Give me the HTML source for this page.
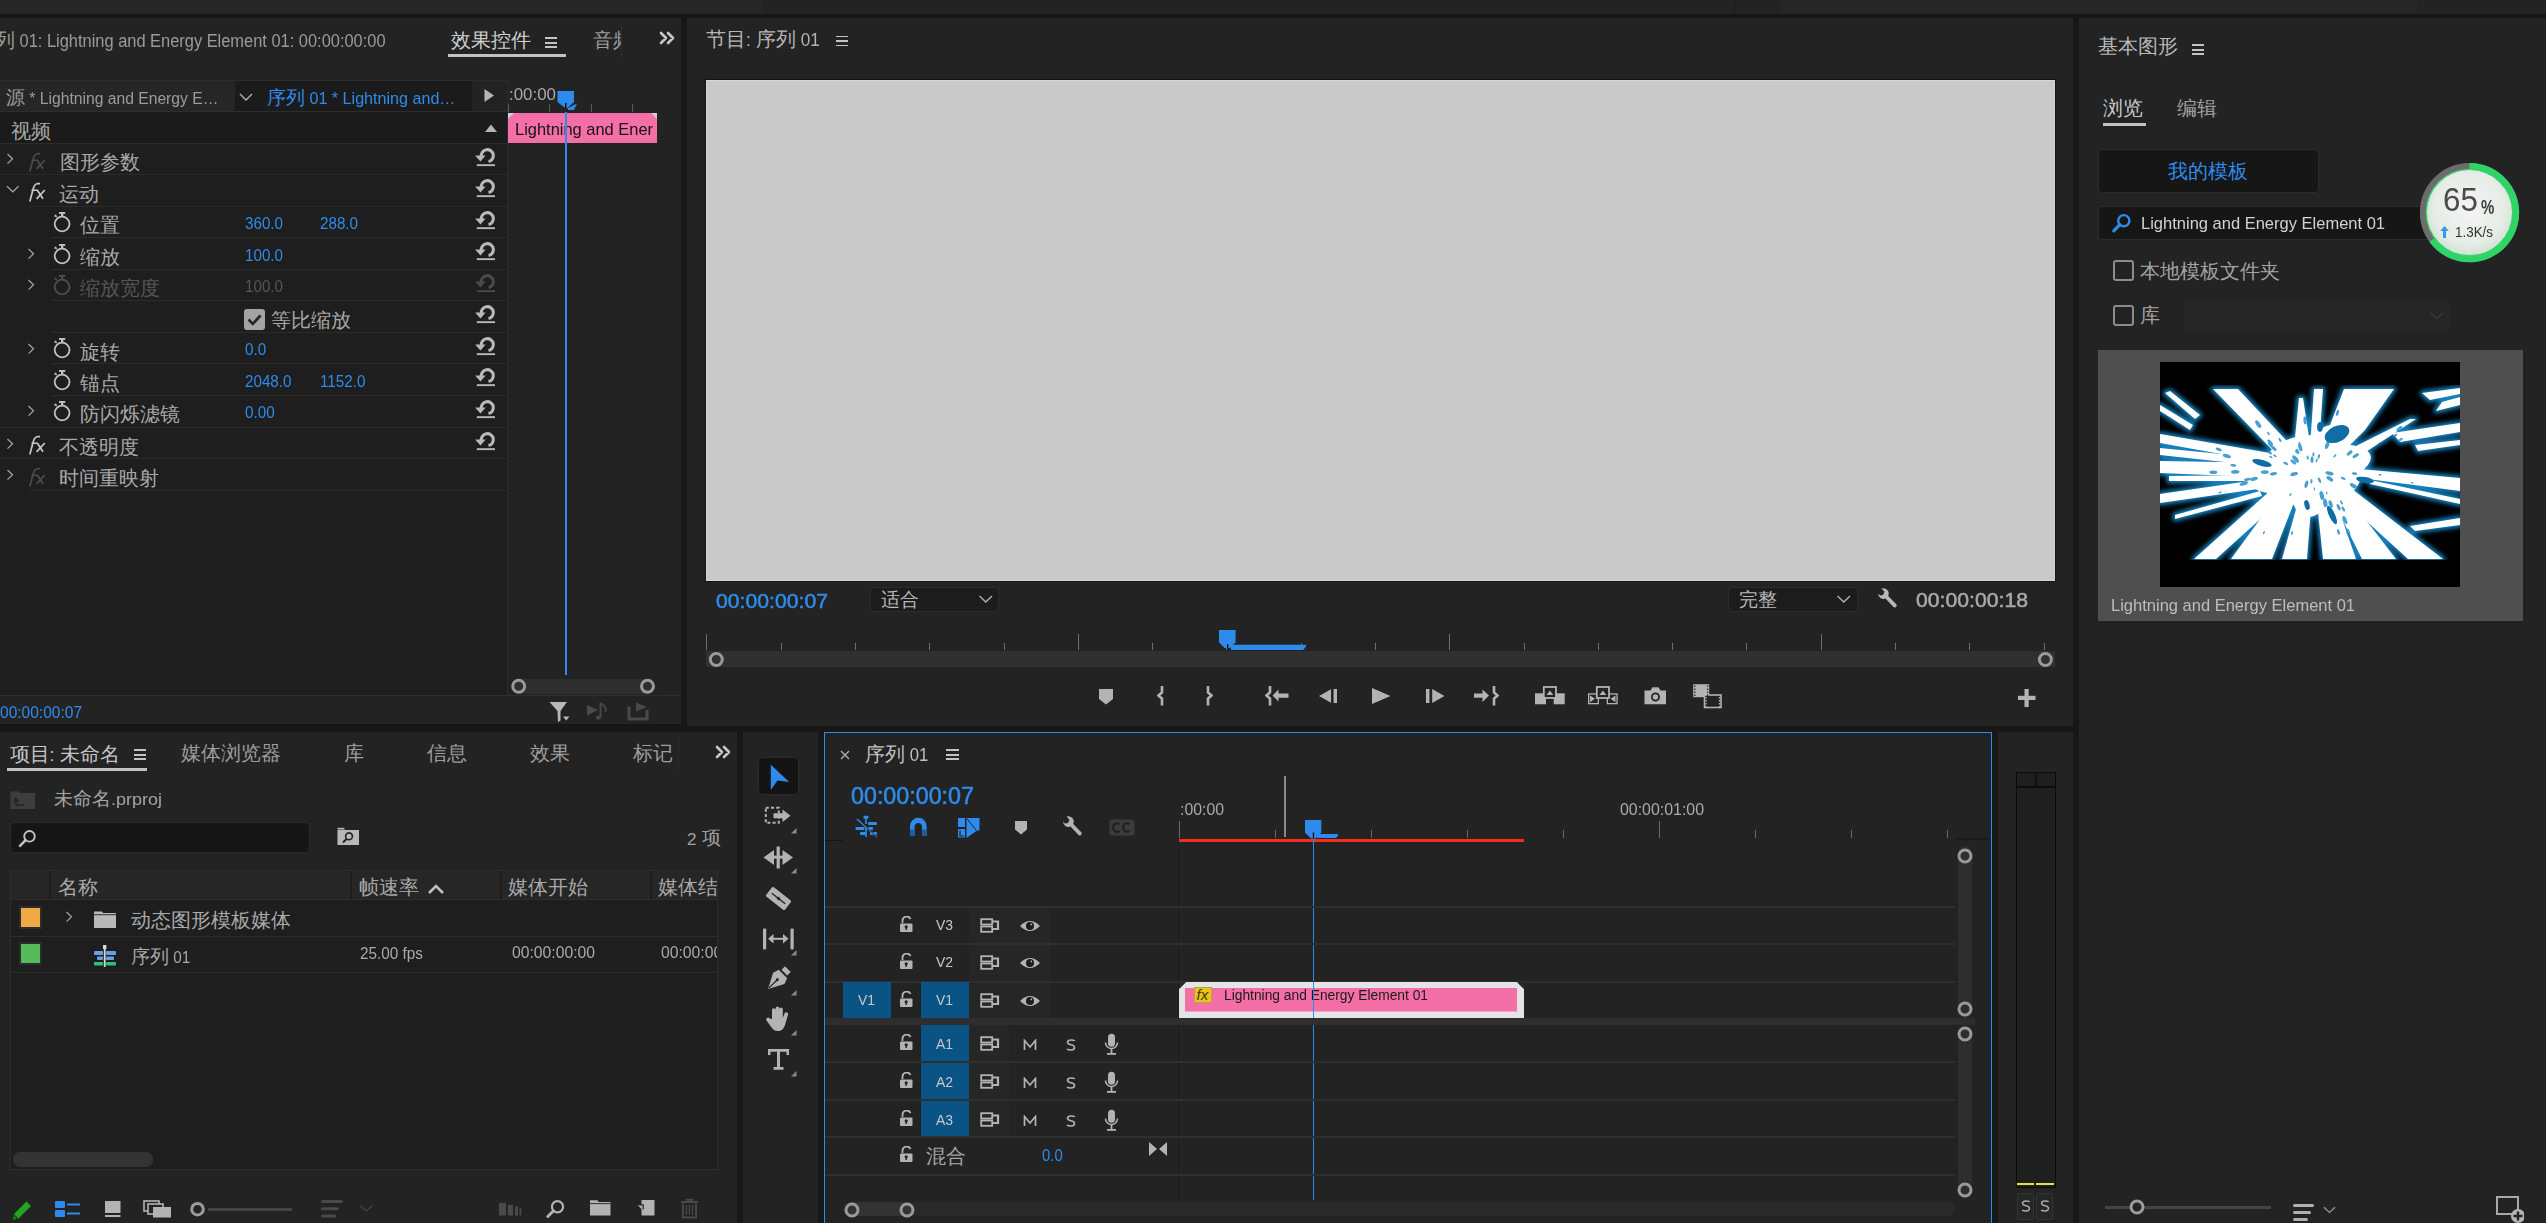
<!DOCTYPE html>
<html><head><meta charset="utf-8"><style>
html,body{margin:0;padding:0;}
body{width:2546px;height:1223px;overflow:hidden;background:#171717;position:relative;font-family:"Liberation Sans",sans-serif;}
div,svg{position:absolute;box-sizing:border-box;}
.t{white-space:nowrap;}
</style></head><body>
<div style="left:0px;top:0px;width:2546px;height:14px;background:#232323;"></div>
<div style="left:0px;top:0px;width:763px;height:14px;background:#262626;"></div>
<div style="left:1780px;top:0px;width:637px;height:14px;background:#262626;"></div>
<div style="left:1734px;top:0px;width:1px;height:14px;background:#191919;"></div>
<div style="left:0px;top:14px;width:2546px;height:4px;background:#171717;"></div>
<div style="left:0px;top:18px;width:681px;height:708px;background:#232323;"></div>
<div style="left:687px;top:18px;width:1386px;height:708px;background:#232323;"></div>
<div style="left:2079px;top:18px;width:467px;height:1205px;background:#232323;"></div>
<div style="left:0px;top:732px;width:737px;height:491px;background:#232323;"></div>
<div style="left:743px;top:732px;width:75px;height:491px;background:#232323;"></div>
<div style="left:824px;top:732px;width:1168px;height:491px;background:#232323;"></div>
<div style="left:1998px;top:732px;width:75px;height:491px;background:#232323;"></div>
<div style="left:0;top:0;width:430px;height:60px;overflow:hidden">
<div class="t" style="right:44px;top:29.60px;font-size:20px;line-height:20px;color:#9b9b9b;">序列<span style="display:inline-block;white-space:pre;font-size:17.5px;width:370.56px;transform:scaleX(0.9380);transform-origin:0 0"> 01: Lightning and Energy Element 01: 00:00:00:00</span></div>
</div>
<div class="t" style="left:451px;top:29.6px;font-size:20px;line-height:20px;color:#cfcfcf;">效果控件</div>
<div style="left:545px;top:37.0px;width:12px;height:2px;background:#c4c4c4;"></div>
<div style="left:545px;top:41.5px;width:12px;height:2px;background:#c4c4c4;"></div>
<div style="left:545px;top:46.0px;width:12px;height:2px;background:#c4c4c4;"></div>
<div style="left:448px;top:54px;width:118px;height:3px;background:#c3c3c3;"></div>
<div style="left:593px;top:18px;width:29px;height:40px;overflow:hidden"><div class="t" style="left:0;top:11.6px;font-size:20px;line-height:20px;color:#9b9b9b">音频</div></div>
<div style="left:621px;top:22px;width:1px;height:36px;background:#2c2c2c;"></div>
<svg style="position:absolute;left:659px;top:31px;" width="16" height="14" viewBox="0 0 16 14"><path d="M2 2 L7 7 L2 12 M9 2 L14 7 L9 12" stroke="#c8c8c8" stroke-width="2.6" fill="none" stroke-linecap="round" stroke-linejoin="round"/></svg>
<div style="left:0px;top:80px;width:508px;height:32px;background:#222222;border-top:1px solid #2c2c2c;border-right:1px solid #2c2c2c"></div>
<div style="left:0px;top:81px;width:235px;height:30px;background:#262626;"></div>
<div style="left:235px;top:81px;width:237px;height:30px;background:#1b1b1b;"></div>
<div class="t" style="left:6px;top:88.05px;font-size:19px;line-height:19px;color:#9c9c9c;">源<span style="display:inline-block;white-space:pre;font-size:16px;width:193.35px;transform:scaleX(0.9792);transform-origin:0 0"> * Lightning and Energy E…</span></div>
<svg style="position:absolute;left:238px;top:92px;" width="16" height="10" viewBox="0 0 16 10"><path d="M2 2 L8 8 L14 2" stroke="#b0b0b0" stroke-width="1.4" fill="none"/></svg>
<div class="t" style="left:267px;top:88.05px;font-size:19px;line-height:19px;color:#2d8ceb;">序列<span style="display:inline-block;white-space:pre;font-size:16px;width:150.48px;transform:scaleX(1.0069);transform-origin:0 0"> 01 * Lightning and…</span></div>
<svg style="position:absolute;left:484px;top:88px;" width="11" height="15" viewBox="0 0 11 15"><path d="M0.5 1 L10 7.5 L0.5 14 Z" fill="#b4b4b4"/></svg>
<div style="left:0px;top:111px;width:508px;height:1px;background:#2e2e2e;"></div>
<div style="left:0px;top:112px;width:508px;height:583px;background:#1e1e1e;"></div>
<div style="left:0px;top:112px;width:508px;height:31px;background:#1b1b1b;"></div>
<div class="t" style="left:11px;top:121.0px;font-size:20px;line-height:20px;color:#a9a9a9;">视频</div>
<svg style="position:absolute;left:484px;top:123px;" width="14" height="10" viewBox="0 0 14 10"><path d="M1 9 L7 1.5 L13 9 Z" fill="#b4b4b4"/></svg>
<div style="left:507px;top:80px;width:1px;height:615px;background:#2a2a2a;"></div>
<div style="left:0px;top:143px;width:657px;height:1px;background:#2b2b2b;"></div>
<div style="left:0px;top:174px;width:657px;height:1px;background:#2b2b2b;"></div>
<div style="left:29px;top:206px;width:628px;height:1px;background:#2b2b2b;"></div>
<div style="left:51px;top:237px;width:606px;height:1px;background:#2b2b2b;"></div>
<div style="left:51px;top:269px;width:606px;height:1px;background:#2b2b2b;"></div>
<div style="left:51px;top:300px;width:606px;height:1px;background:#2b2b2b;"></div>
<div style="left:51px;top:332px;width:606px;height:1px;background:#2b2b2b;"></div>
<div style="left:51px;top:363px;width:606px;height:1px;background:#2b2b2b;"></div>
<div style="left:51px;top:395px;width:606px;height:1px;background:#2b2b2b;"></div>
<div style="left:0px;top:427px;width:657px;height:1px;background:#2b2b2b;"></div>
<div style="left:0px;top:458px;width:657px;height:1px;background:#2b2b2b;"></div>
<div style="left:29px;top:490px;width:628px;height:1px;background:#2b2b2b;"></div>
<svg style="position:absolute;left:6px;top:152.7px;" width="8" height="12" viewBox="0 0 8 12"><path d="M1.5 1 L6.5 5.8 L1.5 10.6" stroke="#a0a0a0" stroke-width="1.3" fill="none"/></svg>
<svg style="position:absolute;left:29px;top:151.7px;" width="18" height="21" viewBox="0 0 18 21"><path d="M0.8 19.5 L4.6 5.5 Q6 1.5 9.5 1.5 L11 1.7" stroke="#4d4d4d" stroke-width="1.7" fill="none"/><path d="M2.5 8.2 L8.5 8.2" stroke="#4d4d4d" stroke-width="1.5"/><path d="M8.2 8 L14 16.8 M15.8 8 L7.6 16.8" stroke="#4d4d4d" stroke-width="1.7"/></svg>
<div class="t" style="left:60px;top:152.2px;font-size:20px;line-height:20px;color:#a8a8a8;">图形参数</div>
<svg style="position:absolute;left:474px;top:146.7px;" width="22" height="20" viewBox="0 0 22 20"><path d="M7.3 9.5 A6.05 6.05 0 1 1 14.5 14.6" stroke="#b9b9b9" stroke-width="3.1" fill="none"/><path d="M1.1 8.6 L11.6 8.6 L6.5 14.6 Z" fill="#b9b9b9"/><rect x="2.8" y="17.2" width="18.2" height="1.9" fill="#b9b9b9"/></svg>
<svg style="position:absolute;left:6px;top:184.6px;" width="14" height="8" viewBox="0 0 14 8"><path d="M1 1.2 L6.8 6.8 L12.6 1.2" stroke="#a0a0a0" stroke-width="1.3" fill="none"/></svg>
<svg style="position:absolute;left:29px;top:182.1px;" width="18" height="21" viewBox="0 0 18 21"><path d="M0.8 19.5 L4.6 5.5 Q6 1.5 9.5 1.5 L11 1.7" stroke="#c8c8c8" stroke-width="1.7" fill="none"/><path d="M2.5 8.2 L8.5 8.2" stroke="#c8c8c8" stroke-width="1.5"/><path d="M8.2 8 L14 16.8 M15.8 8 L7.6 16.8" stroke="#c8c8c8" stroke-width="1.7"/></svg>
<div class="t" style="left:59px;top:183.6px;font-size:20px;line-height:20px;color:#a8a8a8;">运动</div>
<svg style="position:absolute;left:474px;top:178.1px;" width="22" height="20" viewBox="0 0 22 20"><path d="M7.3 9.5 A6.05 6.05 0 1 1 14.5 14.6" stroke="#b9b9b9" stroke-width="3.1" fill="none"/><path d="M1.1 8.6 L11.6 8.6 L6.5 14.6 Z" fill="#b9b9b9"/><rect x="2.8" y="17.2" width="18.2" height="1.9" fill="#b9b9b9"/></svg>
<svg style="position:absolute;left:52px;top:210.10000000000002px;" width="20" height="24" viewBox="0 0 20 24"><circle cx="10.1" cy="14" r="7.4" stroke="#c2c2c2" stroke-width="1.8" fill="none"/><rect x="7" y="2" width="6.2" height="1.9" fill="#c2c2c2"/><rect x="9" y="3.5" width="2.3" height="3" fill="#c2c2c2"/><path d="M1.8 6.2 L3.9 4.2 L5.4 7.6 Z" fill="#c2c2c2"/></svg>
<div class="t" style="left:80px;top:215.3px;font-size:20px;line-height:20px;color:#a9a9a9;">位置</div>
<div class="t" style="left:244.5px;top:216.20px;font-size:16px;line-height:16px;color:#2d8ceb;"><span style="display:inline-block;white-space:pre;font-size:16px;width:38.04px;transform:scaleX(0.9500);transform-origin:0 0">360.0</span></div>
<div class="t" style="left:319.7px;top:216.20px;font-size:16px;line-height:16px;color:#2d8ceb;"><span style="display:inline-block;white-space:pre;font-size:16px;width:38.04px;transform:scaleX(0.9500);transform-origin:0 0">288.0</span></div>
<svg style="position:absolute;left:474px;top:209.8px;" width="22" height="20" viewBox="0 0 22 20"><path d="M7.3 9.5 A6.05 6.05 0 1 1 14.5 14.6" stroke="#b9b9b9" stroke-width="3.1" fill="none"/><path d="M1.1 8.6 L11.6 8.6 L6.5 14.6 Z" fill="#b9b9b9"/><rect x="2.8" y="17.2" width="18.2" height="1.9" fill="#b9b9b9"/></svg>
<svg style="position:absolute;left:27px;top:247.7px;" width="8" height="12" viewBox="0 0 8 12"><path d="M1.5 1 L6.5 5.8 L1.5 10.6" stroke="#a0a0a0" stroke-width="1.3" fill="none"/></svg>
<svg style="position:absolute;left:52px;top:241.5px;" width="20" height="24" viewBox="0 0 20 24"><circle cx="10.1" cy="14" r="7.4" stroke="#c2c2c2" stroke-width="1.8" fill="none"/><rect x="7" y="2" width="6.2" height="1.9" fill="#c2c2c2"/><rect x="9" y="3.5" width="2.3" height="3" fill="#c2c2c2"/><path d="M1.8 6.2 L3.9 4.2 L5.4 7.6 Z" fill="#c2c2c2"/></svg>
<div class="t" style="left:80px;top:246.7px;font-size:20px;line-height:20px;color:#a9a9a9;">缩放</div>
<div class="t" style="left:244.5px;top:247.60px;font-size:16px;line-height:16px;color:#2d8ceb;"><span style="display:inline-block;white-space:pre;font-size:16px;width:38.04px;transform:scaleX(0.9500);transform-origin:0 0">100.0</span></div>
<svg style="position:absolute;left:474px;top:241.2px;" width="22" height="20" viewBox="0 0 22 20"><path d="M7.3 9.5 A6.05 6.05 0 1 1 14.5 14.6" stroke="#b9b9b9" stroke-width="3.1" fill="none"/><path d="M1.1 8.6 L11.6 8.6 L6.5 14.6 Z" fill="#b9b9b9"/><rect x="2.8" y="17.2" width="18.2" height="1.9" fill="#b9b9b9"/></svg>
<svg style="position:absolute;left:27px;top:279.1px;" width="8" height="12" viewBox="0 0 8 12"><path d="M1.5 1 L6.5 5.8 L1.5 10.6" stroke="#a0a0a0" stroke-width="1.3" fill="none"/></svg>
<svg style="position:absolute;left:52px;top:272.90000000000003px;" width="20" height="24" viewBox="0 0 20 24"><circle cx="10.1" cy="14" r="7.4" stroke="#4f4f4f" stroke-width="1.8" fill="none"/><rect x="7" y="2" width="6.2" height="1.9" fill="#4f4f4f"/><rect x="9" y="3.5" width="2.3" height="3" fill="#4f4f4f"/><path d="M1.8 6.2 L3.9 4.2 L5.4 7.6 Z" fill="#4f4f4f"/></svg>
<div class="t" style="left:80px;top:278.1px;font-size:20px;line-height:20px;color:#555555;">缩放宽度</div>
<div class="t" style="left:244.5px;top:279.00px;font-size:16px;line-height:16px;color:#555555;"><span style="display:inline-block;white-space:pre;font-size:16px;width:38.04px;transform:scaleX(0.9500);transform-origin:0 0">100.0</span></div>
<svg style="position:absolute;left:474px;top:272.6px;" width="22" height="20" viewBox="0 0 22 20"><path d="M7.3 9.5 A6.05 6.05 0 1 1 14.5 14.6" stroke="#4a4a4a" stroke-width="3.1" fill="none"/><path d="M1.1 8.6 L11.6 8.6 L6.5 14.6 Z" fill="#4a4a4a"/><rect x="2.8" y="17.2" width="18.2" height="1.9" fill="#4a4a4a"/></svg>
<svg style="position:absolute;left:27px;top:342.5px;" width="8" height="12" viewBox="0 0 8 12"><path d="M1.5 1 L6.5 5.8 L1.5 10.6" stroke="#a0a0a0" stroke-width="1.3" fill="none"/></svg>
<svg style="position:absolute;left:52px;top:336.3px;" width="20" height="24" viewBox="0 0 20 24"><circle cx="10.1" cy="14" r="7.4" stroke="#c2c2c2" stroke-width="1.8" fill="none"/><rect x="7" y="2" width="6.2" height="1.9" fill="#c2c2c2"/><rect x="9" y="3.5" width="2.3" height="3" fill="#c2c2c2"/><path d="M1.8 6.2 L3.9 4.2 L5.4 7.6 Z" fill="#c2c2c2"/></svg>
<div class="t" style="left:80px;top:341.5px;font-size:20px;line-height:20px;color:#a9a9a9;">旋转</div>
<div class="t" style="left:244.5px;top:342.40px;font-size:16px;line-height:16px;color:#2d8ceb;"><span style="display:inline-block;white-space:pre;font-size:16px;width:21.13px;transform:scaleX(0.9500);transform-origin:0 0">0.0</span></div>
<svg style="position:absolute;left:474px;top:336.0px;" width="22" height="20" viewBox="0 0 22 20"><path d="M7.3 9.5 A6.05 6.05 0 1 1 14.5 14.6" stroke="#b9b9b9" stroke-width="3.1" fill="none"/><path d="M1.1 8.6 L11.6 8.6 L6.5 14.6 Z" fill="#b9b9b9"/><rect x="2.8" y="17.2" width="18.2" height="1.9" fill="#b9b9b9"/></svg>
<svg style="position:absolute;left:52px;top:367.5px;" width="20" height="24" viewBox="0 0 20 24"><circle cx="10.1" cy="14" r="7.4" stroke="#c2c2c2" stroke-width="1.8" fill="none"/><rect x="7" y="2" width="6.2" height="1.9" fill="#c2c2c2"/><rect x="9" y="3.5" width="2.3" height="3" fill="#c2c2c2"/><path d="M1.8 6.2 L3.9 4.2 L5.4 7.6 Z" fill="#c2c2c2"/></svg>
<div class="t" style="left:80px;top:372.7px;font-size:20px;line-height:20px;color:#a9a9a9;">锚点</div>
<div class="t" style="left:244.5px;top:373.60px;font-size:16px;line-height:16px;color:#2d8ceb;"><span style="display:inline-block;white-space:pre;font-size:16px;width:46.49px;transform:scaleX(0.9500);transform-origin:0 0">2048.0</span></div>
<div class="t" style="left:319.7px;top:373.60px;font-size:16px;line-height:16px;color:#2d8ceb;"><span style="display:inline-block;white-space:pre;font-size:16px;width:45.36px;transform:scaleX(0.9500);transform-origin:0 0">1152.0</span></div>
<svg style="position:absolute;left:474px;top:367.2px;" width="22" height="20" viewBox="0 0 22 20"><path d="M7.3 9.5 A6.05 6.05 0 1 1 14.5 14.6" stroke="#b9b9b9" stroke-width="3.1" fill="none"/><path d="M1.1 8.6 L11.6 8.6 L6.5 14.6 Z" fill="#b9b9b9"/><rect x="2.8" y="17.2" width="18.2" height="1.9" fill="#b9b9b9"/></svg>
<svg style="position:absolute;left:27px;top:405.4px;" width="8" height="12" viewBox="0 0 8 12"><path d="M1.5 1 L6.5 5.8 L1.5 10.6" stroke="#a0a0a0" stroke-width="1.3" fill="none"/></svg>
<svg style="position:absolute;left:52px;top:399.2px;" width="20" height="24" viewBox="0 0 20 24"><circle cx="10.1" cy="14" r="7.4" stroke="#c2c2c2" stroke-width="1.8" fill="none"/><rect x="7" y="2" width="6.2" height="1.9" fill="#c2c2c2"/><rect x="9" y="3.5" width="2.3" height="3" fill="#c2c2c2"/><path d="M1.8 6.2 L3.9 4.2 L5.4 7.6 Z" fill="#c2c2c2"/></svg>
<div class="t" style="left:80px;top:404.4px;font-size:20px;line-height:20px;color:#a9a9a9;">防闪烁滤镜</div>
<div class="t" style="left:244.5px;top:405.30px;font-size:16px;line-height:16px;color:#2d8ceb;"><span style="display:inline-block;white-space:pre;font-size:16px;width:29.58px;transform:scaleX(0.9500);transform-origin:0 0">0.00</span></div>
<svg style="position:absolute;left:474px;top:398.9px;" width="22" height="20" viewBox="0 0 22 20"><path d="M7.3 9.5 A6.05 6.05 0 1 1 14.5 14.6" stroke="#b9b9b9" stroke-width="3.1" fill="none"/><path d="M1.1 8.6 L11.6 8.6 L6.5 14.6 Z" fill="#b9b9b9"/><rect x="2.8" y="17.2" width="18.2" height="1.9" fill="#b9b9b9"/></svg>
<div style="left:244px;top:308.90000000000003px;width:21px;height:21px;background:#a3a3a3;border-radius:3px"></div>
<svg style="position:absolute;left:244px;top:308.90000000000003px;" width="21" height="21" viewBox="0 0 21 21"><path d="M4.5 10.5 L8.8 14.8 L16.5 6.5" stroke="#222" stroke-width="2.6" fill="none"/></svg>
<div class="t" style="left:270.6px;top:309.8px;font-size:20px;line-height:20px;color:#a8a8a8;">等比缩放</div>
<svg style="position:absolute;left:474px;top:304.3px;" width="22" height="20" viewBox="0 0 22 20"><path d="M7.3 9.5 A6.05 6.05 0 1 1 14.5 14.6" stroke="#b9b9b9" stroke-width="3.1" fill="none"/><path d="M1.1 8.6 L11.6 8.6 L6.5 14.6 Z" fill="#b9b9b9"/><rect x="2.8" y="17.2" width="18.2" height="1.9" fill="#b9b9b9"/></svg>
<svg style="position:absolute;left:6px;top:437.7px;" width="8" height="12" viewBox="0 0 8 12"><path d="M1.5 1 L6.5 5.8 L1.5 10.6" stroke="#a0a0a0" stroke-width="1.3" fill="none"/></svg>
<svg style="position:absolute;left:29px;top:435.4px;" width="18" height="21" viewBox="0 0 18 21"><path d="M0.8 19.5 L4.6 5.5 Q6 1.5 9.5 1.5 L11 1.7" stroke="#c8c8c8" stroke-width="1.7" fill="none"/><path d="M2.5 8.2 L8.5 8.2" stroke="#c8c8c8" stroke-width="1.5"/><path d="M8.2 8 L14 16.8 M15.8 8 L7.6 16.8" stroke="#c8c8c8" stroke-width="1.7"/></svg>
<div class="t" style="left:59px;top:436.7px;font-size:20px;line-height:20px;color:#a8a8a8;">不透明度</div>
<svg style="position:absolute;left:474px;top:430.9px;" width="22" height="20" viewBox="0 0 22 20"><path d="M7.3 9.5 A6.05 6.05 0 1 1 14.5 14.6" stroke="#b9b9b9" stroke-width="3.1" fill="none"/><path d="M1.1 8.6 L11.6 8.6 L6.5 14.6 Z" fill="#b9b9b9"/><rect x="2.8" y="17.2" width="18.2" height="1.9" fill="#b9b9b9"/></svg>
<svg style="position:absolute;left:6px;top:468.90000000000003px;" width="8" height="12" viewBox="0 0 8 12"><path d="M1.5 1 L6.5 5.8 L1.5 10.6" stroke="#a0a0a0" stroke-width="1.3" fill="none"/></svg>
<svg style="position:absolute;left:29px;top:466.6px;" width="18" height="21" viewBox="0 0 18 21"><path d="M0.8 19.5 L4.6 5.5 Q6 1.5 9.5 1.5 L11 1.7" stroke="#4d4d4d" stroke-width="1.7" fill="none"/><path d="M2.5 8.2 L8.5 8.2" stroke="#4d4d4d" stroke-width="1.5"/><path d="M8.2 8 L14 16.8 M15.8 8 L7.6 16.8" stroke="#4d4d4d" stroke-width="1.7"/></svg>
<div class="t" style="left:59px;top:467.9px;font-size:20px;line-height:20px;color:#a8a8a8;">时间重映射</div>
<div style="left:508px;top:112px;width:149px;height:583px;background:#222222;"></div>
<div class="t" style="left:509px;top:86.05px;font-size:17px;line-height:17px;color:#a9a9a9;"><span style="display:inline-block;white-space:pre;font-size:17px;width:47.00px;transform:scaleX(0.9945);transform-origin:0 0">:00:00</span></div>
<div style="left:549px;top:104px;width:1px;height:8px;background:#5a5a5a;"></div>
<div style="left:591px;top:104px;width:1px;height:8px;background:#5a5a5a;"></div>
<div style="left:632px;top:104px;width:1px;height:8px;background:#5a5a5a;"></div>
<div style="left:508px;top:104px;width:1px;height:8px;background:#5a5a5a;"></div>
<svg style="position:absolute;left:508px;top:113px;" width="149" height="30" viewBox="0 0 149 30"><path d="M0 0 L149 0 L149 30 L0 30 Z" fill="#f46fa7"/><path d="M0 0 L6 0 L0 6 Z" fill="#cfcfcf"/><path d="M149 0 L143 0 L149 6 Z" fill="#cfcfcf"/></svg>
<div class="t" style="left:515px;top:121.45px;font-size:17px;line-height:17px;color:#141414;"><span style="display:inline-block;white-space:pre;font-size:17px;width:138.00px;transform:scaleX(0.9670);transform-origin:0 0">Lightning and Ener</span></div>
<div style="left:565px;top:112px;width:2px;height:563px;background:#2d8ceb;"></div>
<svg style="position:absolute;left:557px;top:91px;" width="30" height="22" viewBox="0 0 30 22"><path d="M0.5 0 L17 0 L17 11 L9.5 18 L0.5 11 Z" fill="#2d8ceb"/><path d="M11 17 L20 12.5 L17 19 L11 19 Z" fill="#2d8ceb"/><rect x="8" y="12" width="1.5" height="6" fill="#111"/></svg>
<div style="left:512px;top:679px;width:142px;height:15px;background:#2e2e2e;border-radius:7px"></div>
<svg style="position:absolute;left:510px;top:678px;" width="18" height="18" viewBox="0 0 18 18"><circle cx="8.7" cy="8.3" r="6" stroke="#9a9a9a" stroke-width="3" fill="#2e2e2e"/></svg>
<svg style="position:absolute;left:639px;top:678px;" width="18" height="18" viewBox="0 0 18 18"><circle cx="8.5" cy="8.3" r="6" stroke="#9a9a9a" stroke-width="3" fill="#2e2e2e"/></svg>
<div style="left:0px;top:695px;width:681px;height:1px;background:#2e2e2e;"></div>
<div class="t" style="left:0px;top:704.25px;font-size:17px;line-height:17px;color:#2d8ceb;"><span style="display:inline-block;white-space:pre;font-size:17px;width:82.00px;transform:scaleX(0.9132);transform-origin:0 0">00:00:00:07</span></div>
<svg style="position:absolute;left:548px;top:701px;" width="24" height="24" viewBox="0 0 24 24"><path d="M1.5 1 L19 1 L12.5 10 L12.5 19.5 L10 21 L9.5 10 Z" fill="#b8b8b8"/><path d="M15 15.5 L21.5 15.5 L18.2 19.5 Z" fill="#b8b8b8"/></svg>
<svg style="position:absolute;left:586px;top:702px;" width="26" height="22" viewBox="0 0 26 22"><path d="M1 3 L12 8 L1 13.5 Z" fill="#4a4a4a"/><path d="M14.5 0.5 L14.5 15 M14.5 1 Q 21 5 19.5 10" stroke="#4a4a4a" stroke-width="1.8" fill="none"/><ellipse cx="12.5" cy="15.5" rx="2.6" ry="2" fill="#4a4a4a"/></svg>
<svg style="position:absolute;left:627px;top:702px;" width="24" height="20" viewBox="0 0 24 20"><path d="M2 4.5 L2 17 L20 17 L20 8" stroke="#4a4a4a" stroke-width="3" fill="none"/><path d="M9 0.5 L19.5 5 L9 9.5 Z" fill="#4a4a4a"/></svg>
<div style="left:0px;top:724px;width:681px;height:2px;background:#151515;"></div>
<div class="t" style="left:706px;top:28.70px;font-size:20px;line-height:20px;color:#b4b4b4;">节目<span style="display:inline-block;white-space:pre;font-size:18.5px;width:9.56px;transform:scaleX(0.9300);transform-origin:0 0">: </span>序列<span style="display:inline-block;white-space:pre;font-size:18.5px;width:23.92px;transform:scaleX(0.9300);transform-origin:0 0"> 01</span></div>
<div style="left:836px;top:35.5px;width:12px;height:1.7px;background:#c4c4c4;"></div>
<div style="left:836px;top:40.1px;width:12px;height:1.7px;background:#c4c4c4;"></div>
<div style="left:836px;top:44.7px;width:12px;height:1.7px;background:#c4c4c4;"></div>
<div style="left:705px;top:79px;width:1351px;height:503px;background:#141414;"></div>
<div style="left:706px;top:80px;width:1349px;height:501px;background:#c9c9c9;border:1px solid #d6d6d6"></div>
<div class="t" style="left:716px;top:590.90px;font-size:20px;line-height:20px;color:#2d8ceb;-webkit-text-stroke:0.5px #2d8ceb"><span style="display:inline-block;white-space:pre;font-size:20px;width:112.00px;transform:scaleX(1.0598);transform-origin:0 0">00:00:00:07</span></div>
<div style="left:870px;top:587px;width:129px;height:25px;background:#1c1c1c;border:1px solid #2c2c2c;border-radius:4px"></div>
<div class="t" style="left:881px;top:590.0px;font-size:19px;line-height:19px;color:#b8b8b8;">适合</div>
<svg style="position:absolute;left:978px;top:594px;" width="16" height="10" viewBox="0 0 16 10"><path d="M1.5 2 L7.8 8 L14 2" stroke="#b0b0b0" stroke-width="1.4" fill="none"/></svg>
<div style="left:1728px;top:587px;width:130px;height:25px;background:#1c1c1c;border:1px solid #2c2c2c;border-radius:4px"></div>
<div class="t" style="left:1739px;top:590.0px;font-size:19px;line-height:19px;color:#b8b8b8;">完整</div>
<svg style="position:absolute;left:1836px;top:594px;" width="16" height="10" viewBox="0 0 16 10"><path d="M1.5 2 L7.8 8 L14 2" stroke="#b0b0b0" stroke-width="1.4" fill="none"/></svg>
<svg style="position:absolute;left:1875px;top:587px;" width="23" height="23" viewBox="0 0 23 23"><g transform="scale(1.0)"><path d="M3 6.5 A5.5 5.5 0 0 0 10.5 11.5 L18.5 20 A2 2 0 0 0 21.5 17.5 L13.2 9 A5.5 5.5 0 0 0 6.5 1.5 L9.5 4.8 L8 8 L5 8.6 Z" fill="#b8b8b8"/></g></svg>
<div class="t" style="left:1916px;top:590.00px;font-size:20px;line-height:20px;color:#a9a9a9;-webkit-text-stroke:0.5px #a9a9a9"><span style="display:inline-block;white-space:pre;font-size:20px;width:112.00px;transform:scaleX(1.0598);transform-origin:0 0">00:00:00:18</span></div>
<div style="left:706px;top:634px;width:1px;height:16px;background:#6e6e6e;"></div>
<div style="left:781px;top:643px;width:1px;height:7px;background:#6e6e6e;"></div>
<div style="left:855px;top:643px;width:1px;height:7px;background:#6e6e6e;"></div>
<div style="left:929px;top:643px;width:1px;height:7px;background:#6e6e6e;"></div>
<div style="left:1004px;top:643px;width:1px;height:7px;background:#6e6e6e;"></div>
<div style="left:1078px;top:634px;width:1px;height:16px;background:#6e6e6e;"></div>
<div style="left:1152px;top:643px;width:1px;height:7px;background:#6e6e6e;"></div>
<div style="left:1226px;top:643px;width:1px;height:7px;background:#6e6e6e;"></div>
<div style="left:1301px;top:643px;width:1px;height:7px;background:#6e6e6e;"></div>
<div style="left:1375px;top:643px;width:1px;height:7px;background:#6e6e6e;"></div>
<div style="left:1449px;top:634px;width:1px;height:16px;background:#6e6e6e;"></div>
<div style="left:1524px;top:643px;width:1px;height:7px;background:#6e6e6e;"></div>
<div style="left:1598px;top:643px;width:1px;height:7px;background:#6e6e6e;"></div>
<div style="left:1672px;top:643px;width:1px;height:7px;background:#6e6e6e;"></div>
<div style="left:1746px;top:643px;width:1px;height:7px;background:#6e6e6e;"></div>
<div style="left:1821px;top:634px;width:1px;height:16px;background:#6e6e6e;"></div>
<div style="left:1895px;top:643px;width:1px;height:7px;background:#6e6e6e;"></div>
<div style="left:1969px;top:643px;width:1px;height:7px;background:#6e6e6e;"></div>
<div style="left:2044px;top:643px;width:1px;height:7px;background:#6e6e6e;"></div>
<div style="left:706px;top:651px;width:1349px;height:16px;background:#303030;"></div>
<svg style="position:absolute;left:707px;top:650px;" width="19" height="19" viewBox="0 0 19 19"><circle cx="9.3" cy="9.5" r="6" stroke="#9a9a9a" stroke-width="3" fill="#303030"/></svg>
<svg style="position:absolute;left:2036px;top:650px;" width="19" height="19" viewBox="0 0 19 19"><circle cx="9.4" cy="9.5" r="6" stroke="#9a9a9a" stroke-width="3" fill="#303030"/></svg>
<svg style="position:absolute;left:1218px;top:629px;" width="90" height="22" viewBox="0 0 90 22"><path d="M1 1 L17.6 1 L17.6 13.2 L12 19 L6.5 19 L1 13.2 Z" fill="#2d8ceb"/><path d="M13 15.8 L88 15.8 L88 17.5 L85.5 20.5 L85.5 21 L13 21 Z" fill="#2d8ceb"/><rect x="9" y="15" width="1.3" height="4" fill="#111"/></svg>
<svg style="position:absolute;left:1098px;top:688px;" width="16" height="17" viewBox="0 0 16 17"><path d="M1 1 L15 1 L15 11 L8 16.5 L1 11 Z" fill="#b3b3b3"/></svg>
<svg style="position:absolute;left:1157px;top:685px;" width="8" height="22" viewBox="0 0 8 22"><path d="M5 1 L5 7.5 L1.5 10.5 L5 13.5 L5 20.5" stroke="#b3b3b3" stroke-width="2.6" fill="none"/></svg>
<svg style="position:absolute;left:1205px;top:685px;" width="8" height="22" viewBox="0 0 8 22"><path d="M3 1 L3 7.5 L6.5 10.5 L3 13.5 L3 20.5" stroke="#b3b3b3" stroke-width="2.6" fill="none"/></svg>
<svg style="position:absolute;left:1265px;top:685px;" width="26" height="22" viewBox="0 0 26 22"><path d="M5 1 L5 7.5 L1.5 10.5 L5 13.5 L5 20.5" stroke="#b3b3b3" stroke-width="2.6" fill="none"/><path d="M7.5 10.5 L13.5 4.5 L13.5 8.5 L23.5 8.5 L23.5 12.8 L13.5 12.8 L13.5 16.5 Z" fill="#b3b3b3"/></svg>
<svg style="position:absolute;left:1318px;top:688px;" width="21" height="16" viewBox="0 0 21 16"><path d="M1 8 L13 1.2 L13 14.8 Z" fill="#b3b3b3"/><rect x="15.6" y="1" width="3.4" height="14" fill="#b3b3b3"/></svg>
<svg style="position:absolute;left:1371px;top:687px;" width="21" height="18" viewBox="0 0 21 18"><path d="M1 1 L19.5 9 L1 17 Z" fill="#b3b3b3"/></svg>
<svg style="position:absolute;left:1425px;top:688px;" width="21" height="16" viewBox="0 0 21 16"><rect x="1" y="1" width="3.4" height="14" fill="#b3b3b3"/><path d="M7.2 1 L19.4 8 L7.2 15 Z" fill="#b3b3b3"/></svg>
<svg style="position:absolute;left:1473px;top:685px;" width="26" height="22" viewBox="0 0 26 22"><path d="M1 8.5 L9.5 8.5 L9.5 4.5 L16 10.5 L9.5 17 L9.5 12.8 L1 12.8 Z" fill="#b3b3b3"/><path d="M21 1 L21 7.5 L24.5 10.5 L21 13.5 L21 20.5" stroke="#b3b3b3" stroke-width="2.6" fill="none"/></svg>
<svg style="position:absolute;left:1535px;top:686px;" width="30" height="19" viewBox="0 0 30 19"><rect x="0" y="7.3" width="11" height="11" fill="#b3b3b3"/><rect x="18.7" y="7.3" width="11" height="11" fill="#b3b3b3"/><rect x="8.8" y="1" width="12.2" height="11" stroke="#b3b3b3" stroke-width="1.8" fill="#232323"/><path d="M11.5 9 L14.9 4.5 L18.3 9 Z" fill="#b3b3b3"/></svg>
<svg style="position:absolute;left:1588px;top:686px;" width="30" height="19" viewBox="0 0 30 19"><rect x="0" y="7.3" width="11" height="11" fill="#b3b3b3"/><rect x="1.3" y="8.6" width="8.4" height="8.4" fill="#232323"/><path d="M2 9.5 L7 12.8 L2 16.2 Z" fill="#b3b3b3"/><rect x="18.7" y="7.3" width="11" height="11" fill="#b3b3b3"/><rect x="20" y="8.6" width="8.4" height="8.4" fill="#232323"/><path d="M27.5 9.5 L22.5 12.8 L27.5 16.2 Z" fill="#b3b3b3"/><rect x="8.8" y="1" width="12.2" height="11" stroke="#b3b3b3" stroke-width="1.8" fill="#232323"/><path d="M11.5 9 L14.9 4.5 L18.3 9 Z" fill="#b3b3b3"/></svg>
<svg style="position:absolute;left:1644px;top:686px;" width="23" height="19" viewBox="0 0 23 19"><path d="M0.5 4.5 L6.5 4.5 L8.5 1.2 L14.5 1.2 L16.5 4.5 L22 4.5 L22 18.2 L0.5 18.2 Z" fill="#b3b3b3"/><circle cx="11.5" cy="11" r="3.6" stroke="#232323" stroke-width="1.8" fill="#b3b3b3"/></svg>
<svg style="position:absolute;left:1692px;top:683px;" width="32" height="26" viewBox="0 0 32 26"><rect x="1.2" y="1.2" width="16" height="13" fill="#b3b3b3"/><rect x="12.5" y="12" width="16.5" height="12.5" stroke="#b3b3b3" stroke-width="1.6" fill="#232323"/><rect x="15" y="14.5" width="11.5" height="8" fill="#232323"/><rect x="2.3" y="2.5" width="1.2" height="1.5" fill="#232323"/><rect x="15" y="2.5" width="1.2" height="1.5" fill="#232323"/><rect x="2.3" y="5.5" width="1.2" height="1.5" fill="#232323"/><rect x="15" y="5.5" width="1.2" height="1.5" fill="#232323"/><rect x="2.3" y="8.5" width="1.2" height="1.5" fill="#232323"/><rect x="15" y="8.5" width="1.2" height="1.5" fill="#232323"/><rect x="2.3" y="11.5" width="1.2" height="1.5" fill="#232323"/><rect x="15" y="11.5" width="1.2" height="1.5" fill="#232323"/><rect x="13.5" y="14" width="1.2" height="1.5" fill="#b3b3b3"/><rect x="26.8" y="14" width="1.2" height="1.5" fill="#b3b3b3"/><rect x="13.5" y="17" width="1.2" height="1.5" fill="#b3b3b3"/><rect x="26.8" y="17" width="1.2" height="1.5" fill="#b3b3b3"/><rect x="13.5" y="20" width="1.2" height="1.5" fill="#b3b3b3"/><rect x="26.8" y="20" width="1.2" height="1.5" fill="#b3b3b3"/><rect x="13.5" y="23" width="1.2" height="1.5" fill="#b3b3b3"/><rect x="26.8" y="23" width="1.2" height="1.5" fill="#b3b3b3"/></svg>
<svg style="position:absolute;left:2017px;top:688px;" width="20" height="20" viewBox="0 0 20 20"><rect x="7.5" y="1" width="4.2" height="18" fill="#b3b3b3"/><rect x="1" y="7.8" width="17.5" height="4.2" fill="#b3b3b3"/></svg>
<div class="t" style="left:2098px;top:36.2px;font-size:20px;line-height:20px;color:#b8b8b8;">基本图形</div>
<div style="left:2192px;top:44.0px;width:12px;height:2px;background:#c4c4c4;"></div>
<div style="left:2192px;top:48.5px;width:12px;height:2px;background:#c4c4c4;"></div>
<div style="left:2192px;top:53.0px;width:12px;height:2px;background:#c4c4c4;"></div>
<div class="t" style="left:2103px;top:97.7px;font-size:20px;line-height:20px;color:#c8c8c8;">浏览</div>
<div style="left:2103px;top:123px;width:43px;height:3px;background:#c3c3c3;"></div>
<div class="t" style="left:2177px;top:97.7px;font-size:20px;line-height:20px;color:#a0a0a0;">编辑</div>
<div style="left:2098px;top:149px;width:221px;height:44px;background:#161616;border:1px solid #2c2c2c;border-radius:4px"></div>
<div class="t" style="left:2167.5px;top:161.2px;font-size:20px;line-height:20px;color:#2d8ceb;">我的模板</div>
<div style="left:2098px;top:206px;width:352px;height:34px;background:#161616;border:1px solid #2c2c2c;border-radius:4px"></div>
<svg style="position:absolute;left:2111px;top:213px;" width="22" height="21" viewBox="0 0 22 21"><circle cx="12.8" cy="7.7" r="5.6" stroke="#2d8ceb" stroke-width="2.4" fill="none"/><path d="M8.8 11.6 L2.8 17.8" stroke="#2d8ceb" stroke-width="3.2" stroke-linecap="round"/></svg>
<div class="t" style="left:2141px;top:215.25px;font-size:17px;line-height:17px;color:#d2d2d2;"><span style="display:inline-block;white-space:pre;font-size:17px;width:244.00px;transform:scaleX(0.9707);transform-origin:0 0">Lightning and Energy Element 01</span></div>
<svg style="position:absolute;left:2432px;top:219px;" width="12" height="12" viewBox="0 0 12 12"><path d="M1 1 L11 11 M11 1 L1 11" stroke="#3a3a3a" stroke-width="1.2"/></svg>
<div style="left:2113px;top:260px;width:21px;height:21px;background:transparent;border:2.4px solid #8c8c8c;border-radius:3px"></div>
<div class="t" style="left:2140px;top:260.9px;font-size:20px;line-height:20px;color:#a3a3a3;">本地模板文件夹</div>
<div style="left:2113px;top:305px;width:21px;height:21px;background:transparent;border:2.4px solid #8c8c8c;border-radius:3px"></div>
<div class="t" style="left:2140px;top:304.5px;font-size:20px;line-height:20px;color:#a3a3a3;">库</div>
<div style="left:2184px;top:302px;width:266px;height:29px;background:#262626;border-radius:4px"></div>
<svg style="position:absolute;left:2429px;top:311px;" width="16" height="10" viewBox="0 0 16 10"><path d="M1.5 2 L7.8 7.5 L14 2" stroke="#3c3c3c" stroke-width="1.3" fill="none"/></svg>
<svg style="position:absolute;left:2419px;top:162px;" width="101" height="101" viewBox="0 0 101 101"><defs><radialGradient id="gw" cx="50%" cy="45%" r="55%"><stop offset="0" stop-color="#f4f4f4"/><stop offset="0.75" stop-color="#e6ece6"/><stop offset="1" stop-color="#cfe3d2"/></radialGradient></defs><circle cx="50.5" cy="50.6" r="46.6" stroke="#6c6c6c" stroke-width="6" fill="none"/><path d="M50.5 4.0 A46.6 46.6 0 1 1 12.80 77.99" stroke="#2fd467" stroke-width="6.2" fill="none"/><circle cx="50.5" cy="50.6" r="43.2" fill="url(#gw)" stroke="#3cd36f" stroke-width="1.4"/><path d="M84 14 L94 24" stroke="#fff" stroke-width="0" /></svg>
<div class="t" style="left:2443px;top:182.55px;font-size:33px;line-height:33px;color:#4a4a4a;"><span style="display:inline-block;white-space:pre;font-size:33px;width:34.87px;transform:scaleX(0.9500);transform-origin:0 0">65</span></div>
<div class="t" style="left:2480.5px;top:197.00px;font-size:20px;line-height:20px;color:#3c3c3c;font-weight:bold"><span style="display:inline-block;white-space:pre;font-size:20px;width:13.34px;transform:scaleX(0.7500);transform-origin:0 0">%</span></div>
<svg style="position:absolute;left:2440px;top:225px;" width="10" height="14" viewBox="0 0 10 14"><path d="M4.5 1 L8.8 6 L6 6 L6 13 L3 13 L3 6 L0.2 6 Z" fill="#3b95f2"/></svg>
<div class="t" style="left:2455px;top:224.82px;font-size:14.5px;line-height:14.5px;color:#333333;"><span style="display:inline-block;white-space:pre;font-size:14.5px;width:38.00px;transform:scaleX(0.9245);transform-origin:0 0">1.3K/s</span></div>
<div style="left:2098px;top:350px;width:425px;height:271px;background:#4f4f4f;"></div>
<div class="t" style="left:2111px;top:597.45px;font-size:17px;line-height:17px;color:#bdbdbd;"><span style="display:inline-block;white-space:pre;font-size:17px;width:244.00px;transform:scaleX(0.9707);transform-origin:0 0">Lightning and Energy Element 01</span></div>
<div style="left:2160px;top:362px;width:300px;height:225px;background:#000;"></div>
<svg style="position:absolute;left:2160px;top:385px;" width="300" height="175" viewBox="0 0 300 175"><defs><filter id="glow" x="-10%" y="-10%" width="120%" height="120%"><feGaussianBlur stdDeviation="2.2"/></filter><clipPath id="wc"><path d="M53.0 4.0 L78.0 4.0 L142.0 72.0 L127.0 80.0 Z"/><path d="M154.0 4.0 L163.0 4.0 L159.0 62.0 L150.0 62.0 Z"/><path d="M184.0 4.0 L234.0 4.0 L205.0 45.0 L168.0 82.0 L150.0 72.0 L170.0 40.0 Z"/><path d="M139.0 13.0 L143.0 13.0 L152.0 72.0 L134.0 62.0 Z"/><path d="M0.0 49.0 L0.0 58.0 L105.0 77.0 L110.0 68.0 Z"/><path d="M0.0 63.0 L0.0 70.0 L110.0 82.0 L112.0 74.0 Z"/><path d="M0.0 76.0 L0.0 88.0 L122.0 93.0 L122.0 78.0 Z"/><path d="M9.0 91.0 L9.0 96.0 L102.0 96.0 L102.0 90.0 Z"/><path d="M0.0 109.0 L0.0 118.0 L112.0 102.0 L110.0 93.0 Z"/><path d="M15.0 130.0 L15.0 134.0 L102.0 111.0 L100.0 106.0 Z"/><path d="M34.0 174.0 L56.0 174.0 L127.0 110.0 L112.0 104.0 Z"/><path d="M5.0 8.0 L10.0 6.0 L40.0 30.0 L35.0 34.0 Z"/><path d="M250.0 34.0 L256.0 34.0 L192.0 76.0 L186.0 66.0 Z"/><path d="M300.0 93.0 L300.0 106.0 L200.0 93.0 L200.0 84.0 Z"/><path d="M300.0 114.0 L300.0 119.0 L210.0 99.0 L210.0 95.0 Z"/><path d="M262.0 8.0 L300.0 3.0 L300.0 9.0 L270.0 15.0 Z"/><path d="M282.0 17.0 L300.0 12.0 L300.0 20.0 L276.0 26.0 Z"/><path d="M232.0 48.0 L300.0 38.0 L300.0 47.0 L240.0 57.0 Z"/><path d="M250.0 141.0 L300.0 133.0 L300.0 140.0 L255.0 146.0 Z"/><path d="M248.0 174.0 L283.0 174.0 L192.0 104.0 L180.0 112.0 Z"/><path d="M71.0 174.0 L112.0 174.0 L137.0 110.0 L122.0 104.0 Z"/><path d="M122.0 174.0 L147.0 174.0 L152.0 110.0 L140.0 110.0 Z"/><path d="M163.0 174.0 L196.0 174.0 L172.0 105.0 L156.0 108.0 Z"/><path d="M202.0 174.0 L236.0 174.0 L182.0 104.0 L170.0 110.0 Z"/><path d="M255.0 60.0 L300.0 55.0 L300.0 60.0 L258.0 66.0 Z"/><path d="M0.0 20.0 L0.0 26.0 L30.0 45.0 L33.0 40.0 Z"/><ellipse cx="152" cy="86" rx="50" ry="36"/><ellipse cx="150" cy="84" rx="62" ry="22" transform="rotate(-12 150 84)"/><ellipse cx="160" cy="86" rx="25" ry="48" transform="rotate(20 160 86)"/></clipPath></defs><g fill="#1680bd" stroke="#1680bd" stroke-width="5" stroke-linejoin="round" filter="url(#glow)"><path d="M53.0 4.0 L78.0 4.0 L142.0 72.0 L127.0 80.0 Z"/><path d="M154.0 4.0 L163.0 4.0 L159.0 62.0 L150.0 62.0 Z"/><path d="M184.0 4.0 L234.0 4.0 L205.0 45.0 L168.0 82.0 L150.0 72.0 L170.0 40.0 Z"/><path d="M139.0 13.0 L143.0 13.0 L152.0 72.0 L134.0 62.0 Z"/><path d="M0.0 49.0 L0.0 58.0 L105.0 77.0 L110.0 68.0 Z"/><path d="M0.0 63.0 L0.0 70.0 L110.0 82.0 L112.0 74.0 Z"/><path d="M0.0 76.0 L0.0 88.0 L122.0 93.0 L122.0 78.0 Z"/><path d="M9.0 91.0 L9.0 96.0 L102.0 96.0 L102.0 90.0 Z"/><path d="M0.0 109.0 L0.0 118.0 L112.0 102.0 L110.0 93.0 Z"/><path d="M15.0 130.0 L15.0 134.0 L102.0 111.0 L100.0 106.0 Z"/><path d="M34.0 174.0 L56.0 174.0 L127.0 110.0 L112.0 104.0 Z"/><path d="M5.0 8.0 L10.0 6.0 L40.0 30.0 L35.0 34.0 Z"/><path d="M250.0 34.0 L256.0 34.0 L192.0 76.0 L186.0 66.0 Z"/><path d="M300.0 93.0 L300.0 106.0 L200.0 93.0 L200.0 84.0 Z"/><path d="M300.0 114.0 L300.0 119.0 L210.0 99.0 L210.0 95.0 Z"/><path d="M262.0 8.0 L300.0 3.0 L300.0 9.0 L270.0 15.0 Z"/><path d="M282.0 17.0 L300.0 12.0 L300.0 20.0 L276.0 26.0 Z"/><path d="M232.0 48.0 L300.0 38.0 L300.0 47.0 L240.0 57.0 Z"/><path d="M250.0 141.0 L300.0 133.0 L300.0 140.0 L255.0 146.0 Z"/><path d="M248.0 174.0 L283.0 174.0 L192.0 104.0 L180.0 112.0 Z"/><path d="M71.0 174.0 L112.0 174.0 L137.0 110.0 L122.0 104.0 Z"/><path d="M122.0 174.0 L147.0 174.0 L152.0 110.0 L140.0 110.0 Z"/><path d="M163.0 174.0 L196.0 174.0 L172.0 105.0 L156.0 108.0 Z"/><path d="M202.0 174.0 L236.0 174.0 L182.0 104.0 L170.0 110.0 Z"/><path d="M255.0 60.0 L300.0 55.0 L300.0 60.0 L258.0 66.0 Z"/><path d="M0.0 20.0 L0.0 26.0 L30.0 45.0 L33.0 40.0 Z"/><ellipse cx="152" cy="86" rx="50" ry="36"/><ellipse cx="150" cy="84" rx="62" ry="22" transform="rotate(-12 150 84)"/><ellipse cx="160" cy="86" rx="25" ry="48" transform="rotate(20 160 86)"/></g><g fill="#ffffff"><path d="M53.0 4.0 L78.0 4.0 L142.0 72.0 L127.0 80.0 Z"/><path d="M154.0 4.0 L163.0 4.0 L159.0 62.0 L150.0 62.0 Z"/><path d="M184.0 4.0 L234.0 4.0 L205.0 45.0 L168.0 82.0 L150.0 72.0 L170.0 40.0 Z"/><path d="M139.0 13.0 L143.0 13.0 L152.0 72.0 L134.0 62.0 Z"/><path d="M0.0 49.0 L0.0 58.0 L105.0 77.0 L110.0 68.0 Z"/><path d="M0.0 63.0 L0.0 70.0 L110.0 82.0 L112.0 74.0 Z"/><path d="M0.0 76.0 L0.0 88.0 L122.0 93.0 L122.0 78.0 Z"/><path d="M9.0 91.0 L9.0 96.0 L102.0 96.0 L102.0 90.0 Z"/><path d="M0.0 109.0 L0.0 118.0 L112.0 102.0 L110.0 93.0 Z"/><path d="M15.0 130.0 L15.0 134.0 L102.0 111.0 L100.0 106.0 Z"/><path d="M34.0 174.0 L56.0 174.0 L127.0 110.0 L112.0 104.0 Z"/><path d="M5.0 8.0 L10.0 6.0 L40.0 30.0 L35.0 34.0 Z"/><path d="M250.0 34.0 L256.0 34.0 L192.0 76.0 L186.0 66.0 Z"/><path d="M300.0 93.0 L300.0 106.0 L200.0 93.0 L200.0 84.0 Z"/><path d="M300.0 114.0 L300.0 119.0 L210.0 99.0 L210.0 95.0 Z"/><path d="M262.0 8.0 L300.0 3.0 L300.0 9.0 L270.0 15.0 Z"/><path d="M282.0 17.0 L300.0 12.0 L300.0 20.0 L276.0 26.0 Z"/><path d="M232.0 48.0 L300.0 38.0 L300.0 47.0 L240.0 57.0 Z"/><path d="M250.0 141.0 L300.0 133.0 L300.0 140.0 L255.0 146.0 Z"/><path d="M248.0 174.0 L283.0 174.0 L192.0 104.0 L180.0 112.0 Z"/><path d="M71.0 174.0 L112.0 174.0 L137.0 110.0 L122.0 104.0 Z"/><path d="M122.0 174.0 L147.0 174.0 L152.0 110.0 L140.0 110.0 Z"/><path d="M163.0 174.0 L196.0 174.0 L172.0 105.0 L156.0 108.0 Z"/><path d="M202.0 174.0 L236.0 174.0 L182.0 104.0 L170.0 110.0 Z"/><path d="M255.0 60.0 L300.0 55.0 L300.0 60.0 L258.0 66.0 Z"/><path d="M0.0 20.0 L0.0 26.0 L30.0 45.0 L33.0 40.0 Z"/><ellipse cx="152" cy="86" rx="50" ry="36"/><ellipse cx="150" cy="84" rx="62" ry="22" transform="rotate(-12 150 84)"/><ellipse cx="160" cy="86" rx="25" ry="48" transform="rotate(20 160 86)"/></g><g fill="#2a8fc8" opacity="0.85" clip-path="url(#wc)"><ellipse cx="83.8" cy="98.5" rx="4.3" ry="1.9" transform="rotate(163 83.8 98.5)"/><ellipse cx="87.3" cy="94.4" rx="3.3" ry="1.5" transform="rotate(168 87.3 94.4)"/><ellipse cx="178.6" cy="122.2" rx="3.4" ry="1.5" transform="rotate(66 178.6 122.2)"/><ellipse cx="158.8" cy="71.5" rx="2.4" ry="1.1" transform="rotate(285 158.8 71.5)"/><ellipse cx="232.8" cy="116.7" rx="3.6" ry="1.6" transform="rotate(33 232.8 116.7)"/><ellipse cx="261.1" cy="103.4" rx="4.4" ry="2.0" transform="rotate(15 261.1 103.4)"/><ellipse cx="108.4" cy="48.5" rx="2.0" ry="0.9" transform="rotate(235 108.4 48.5)"/><ellipse cx="220.0" cy="89.8" rx="1.7" ry="0.8" transform="rotate(5 220.0 89.8)"/><ellipse cx="166.7" cy="108.1" rx="1.6" ry="0.7" transform="rotate(68 166.7 108.1)"/><ellipse cx="93.9" cy="93.9" rx="4.0" ry="1.8" transform="rotate(167 93.9 93.9)"/><ellipse cx="73.3" cy="80.4" rx="3.0" ry="1.3" transform="rotate(187 73.3 80.4)"/><ellipse cx="120.0" cy="55.0" rx="2.3" ry="1.1" transform="rotate(238 120.0 55.0)"/><ellipse cx="266.3" cy="85.0" rx="4.0" ry="1.8" transform="rotate(359 266.3 85.0)"/><ellipse cx="139.6" cy="59.0" rx="2.2" ry="1.0" transform="rotate(255 139.6 59.0)"/><ellipse cx="146.4" cy="99.3" rx="3.8" ry="1.7" transform="rotate(104 146.4 99.3)"/><ellipse cx="71.3" cy="120.6" rx="2.7" ry="1.2" transform="rotate(144 71.3 120.6)"/><ellipse cx="248.3" cy="70.6" rx="1.5" ry="0.7" transform="rotate(345 248.3 70.6)"/><ellipse cx="178.5" cy="146.8" rx="2.9" ry="1.3" transform="rotate(75 178.5 146.8)"/><ellipse cx="206.9" cy="82.0" rx="1.7" ry="0.8" transform="rotate(353 206.9 82.0)"/><ellipse cx="88.2" cy="46.0" rx="2.3" ry="1.0" transform="rotate(227 88.2 46.0)"/><ellipse cx="193.8" cy="101.1" rx="4.4" ry="2.0" transform="rotate(31 193.8 101.1)"/><ellipse cx="153.4" cy="69.5" rx="2.2" ry="1.0" transform="rotate(273 153.4 69.5)"/><ellipse cx="169.8" cy="93.8" rx="3.9" ry="1.8" transform="rotate(36 169.8 93.8)"/><ellipse cx="183.3" cy="124.0" rx="2.8" ry="1.3" transform="rotate(64 183.3 124.0)"/><ellipse cx="184.2" cy="134.7" rx="1.9" ry="0.9" transform="rotate(69 184.2 134.7)"/><ellipse cx="134.9" cy="73.1" rx="2.8" ry="1.2" transform="rotate(232 134.9 73.1)"/><ellipse cx="161.9" cy="110.7" rx="4.4" ry="2.0" transform="rotate(77 161.9 110.7)"/><ellipse cx="167.2" cy="60.2" rx="4.2" ry="1.9" transform="rotate(289 167.2 60.2)"/><ellipse cx="165.5" cy="117.6" rx="4.1" ry="1.8" transform="rotate(76 165.5 117.6)"/><ellipse cx="135.6" cy="74.0" rx="4.5" ry="2.0" transform="rotate(231 135.6 74.0)"/><ellipse cx="161.5" cy="110.0" rx="3.8" ry="1.7" transform="rotate(77 161.5 110.0)"/><ellipse cx="130.4" cy="109.7" rx="1.7" ry="0.8" transform="rotate(118 130.4 109.7)"/><ellipse cx="214.1" cy="109.4" rx="2.2" ry="1.0" transform="rotate(32 214.1 109.4)"/><ellipse cx="109.5" cy="67.4" rx="2.9" ry="1.3" transform="rotate(216 109.5 67.4)"/><ellipse cx="213.8" cy="76.4" rx="3.2" ry="1.5" transform="rotate(345 213.8 76.4)"/><ellipse cx="174.9" cy="70.9" rx="2.0" ry="0.9" transform="rotate(312 174.9 70.9)"/><ellipse cx="233.2" cy="54.8" rx="2.2" ry="1.0" transform="rotate(327 233.2 54.8)"/><ellipse cx="184.9" cy="135.1" rx="4.3" ry="1.9" transform="rotate(68 184.9 135.1)"/><ellipse cx="188.2" cy="147.5" rx="4.1" ry="1.9" transform="rotate(71 188.2 147.5)"/><ellipse cx="106.1" cy="65.3" rx="1.8" ry="0.8" transform="rotate(217 106.1 65.3)"/><ellipse cx="259.8" cy="101.8" rx="2.2" ry="1.0" transform="rotate(14 259.8 101.8)"/><ellipse cx="140.3" cy="62.4" rx="4.0" ry="1.8" transform="rotate(254 140.3 62.4)"/><ellipse cx="114.9" cy="70.8" rx="2.0" ry="0.9" transform="rotate(215 114.9 70.8)"/><ellipse cx="147.7" cy="72.6" rx="2.2" ry="1.0" transform="rotate(259 147.7 72.6)"/><ellipse cx="58.7" cy="64.4" rx="3.3" ry="1.5" transform="rotate(201 58.7 64.4)"/><ellipse cx="131.9" cy="148.0" rx="2.1" ry="1.0" transform="rotate(101 131.9 148.0)"/><ellipse cx="194.5" cy="88.6" rx="2.8" ry="1.3" transform="rotate(6 194.5 88.6)"/><ellipse cx="183.2" cy="93.4" rx="2.6" ry="1.2" transform="rotate(22 183.2 93.4)"/><ellipse cx="125.8" cy="78.4" rx="2.6" ry="1.2" transform="rotate(206 125.8 78.4)"/><ellipse cx="239.4" cy="43.7" rx="3.5" ry="1.6" transform="rotate(321 239.4 43.7)"/><ellipse cx="125.4" cy="45.2" rx="1.9" ry="0.9" transform="rotate(249 125.4 45.2)"/><ellipse cx="169.5" cy="88.3" rx="4.2" ry="1.9" transform="rotate(13 169.5 88.3)"/><ellipse cx="118.3" cy="23.3" rx="1.6" ry="0.7" transform="rotate(252 118.3 23.3)"/><ellipse cx="110.2" cy="57.5" rx="3.7" ry="1.7" transform="rotate(229 110.2 57.5)"/><ellipse cx="103.9" cy="147.7" rx="1.7" ry="0.8" transform="rotate(115 103.9 147.7)"/><ellipse cx="66.9" cy="71.0" rx="4.2" ry="1.9" transform="rotate(197 66.9 71.0)"/><ellipse cx="145.1" cy="35.5" rx="3.9" ry="1.7" transform="rotate(265 145.1 35.5)"/><ellipse cx="195.8" cy="70.7" rx="3.6" ry="1.6" transform="rotate(329 195.8 70.7)"/><ellipse cx="234.9" cy="50.7" rx="2.8" ry="1.2" transform="rotate(324 234.9 50.7)"/><ellipse cx="177.5" cy="27.9" rx="3.2" ry="1.4" transform="rotate(285 177.5 27.9)"/><ellipse cx="113.9" cy="63.4" rx="3.2" ry="1.5" transform="rotate(225 113.9 63.4)"/><ellipse cx="133.3" cy="77.0" rx="3.4" ry="1.5" transform="rotate(219 133.3 77.0)"/><ellipse cx="254.8" cy="83.4" rx="3.7" ry="1.7" transform="rotate(358 254.8 83.4)"/><ellipse cx="84.3" cy="119.9" rx="3.2" ry="1.5" transform="rotate(140 84.3 119.9)"/><ellipse cx="60.0" cy="107.4" rx="1.8" ry="0.8" transform="rotate(159 60.0 107.4)"/><ellipse cx="152.0" cy="74.7" rx="3.3" ry="1.5" transform="rotate(270 152.0 74.7)"/><ellipse cx="113.4" cy="88.8" rx="3.6" ry="1.6" transform="rotate(173 113.4 88.8)"/><ellipse cx="75.3" cy="86.8" rx="4.3" ry="1.9" transform="rotate(179 75.3 86.8)"/><ellipse cx="151.4" cy="96.3" rx="2.4" ry="1.1" transform="rotate(92 151.4 96.3)"/><ellipse cx="136.2" cy="66.7" rx="2.0" ry="0.9" transform="rotate(244 136.2 66.7)"/><ellipse cx="219.4" cy="59.1" rx="2.8" ry="1.3" transform="rotate(326 219.4 59.1)"/><ellipse cx="189.6" cy="68.0" rx="3.5" ry="1.6" transform="rotate(321 189.6 68.0)"/><ellipse cx="170.7" cy="119.0" rx="3.9" ry="1.8" transform="rotate(71 170.7 119.0)"/><ellipse cx="240.4" cy="54.7" rx="2.7" ry="1.2" transform="rotate(329 240.4 54.7)"/><ellipse cx="110.9" cy="72.0" rx="1.9" ry="0.9" transform="rotate(210 110.9 72.0)"/><ellipse cx="53.3" cy="87.3" rx="4.0" ry="1.8" transform="rotate(179 53.3 87.3)"/><ellipse cx="125.5" cy="22.8" rx="2.3" ry="1.0" transform="rotate(256 125.5 22.8)"/><ellipse cx="181.5" cy="117.4" rx="2.3" ry="1.0" transform="rotate(61 181.5 117.4)"/><ellipse cx="164.8" cy="118.9" rx="3.4" ry="1.5" transform="rotate(77 164.8 118.9)"/><ellipse cx="104.8" cy="87.1" rx="4.0" ry="1.8" transform="rotate(178 104.8 87.1)"/><ellipse cx="212.4" cy="81.9" rx="1.7" ry="0.8" transform="rotate(354 212.4 81.9)"/><ellipse cx="252.2" cy="97.9" rx="1.6" ry="0.7" transform="rotate(11 252.2 97.9)"/><ellipse cx="133.4" cy="44.5" rx="2.4" ry="1.1" transform="rotate(255 133.4 44.5)"/><ellipse cx="156.7" cy="75.6" rx="1.9" ry="0.9" transform="rotate(285 156.7 75.6)"/><ellipse cx="134.1" cy="89.1" rx="4.0" ry="1.8" transform="rotate(164 134.1 89.1)"/><ellipse cx="154.4" cy="103.8" rx="1.6" ry="0.7" transform="rotate(85 154.4 103.8)"/><ellipse cx="110.6" cy="60.1" rx="3.4" ry="1.5" transform="rotate(227 110.6 60.1)"/><ellipse cx="98.2" cy="39.1" rx="4.4" ry="2.0" transform="rotate(236 98.2 39.1)"/><ellipse cx="137.7" cy="66.5" rx="2.9" ry="1.3" transform="rotate(246 137.7 66.5)"/><ellipse cx="159.5" cy="95.2" rx="2.9" ry="1.3" transform="rotate(64 159.5 95.2)"/></g><g fill="#0f6ea6"><ellipse cx="177" cy="49" rx="13" ry="8" transform="rotate(-25 177 49)"/><ellipse cx="160" cy="42" rx="3" ry="5"/><ellipse cx="147" cy="120" rx="2.5" ry="5" transform="rotate(-15 147 120)"/><ellipse cx="172" cy="130" rx="3" ry="10" transform="rotate(-25 172 130)"/><ellipse cx="102" cy="78" rx="10" ry="3" transform="rotate(15 102 78)"/><ellipse cx="205" cy="95" rx="9" ry="3" transform="rotate(10 205 95)"/></g></svg>
<div style="left:2105px;top:1206px;width:166px;height:3px;background:#444444;"></div>
<svg style="position:absolute;left:2127px;top:1197px;" width="20" height="20" viewBox="0 0 20 20"><circle cx="10" cy="10" r="6" stroke="#9c9c9c" stroke-width="3" fill="#232323"/></svg>
<div style="left:2293px;top:1204px;width:21px;height:3px;background:#b0b0b0;border-radius:1.5px"></div>
<div style="left:2293px;top:1211px;width:18px;height:3px;background:#b0b0b0;border-radius:1.5px"></div>
<div style="left:2293px;top:1218px;width:15px;height:3px;background:#b0b0b0;border-radius:1.5px"></div>
<svg style="position:absolute;left:2323px;top:1206px;" width="13" height="8" viewBox="0 0 13 8"><path d="M1 1.2 L6.5 6.5 L12 1.2" stroke="#9a9a9a" stroke-width="1.2" fill="none"/></svg>
<svg style="position:absolute;left:2494px;top:1194px;" width="30" height="29" viewBox="0 0 30 29"><rect x="3" y="3" width="21" height="17" stroke="#a9a9a9" stroke-width="2" fill="none"/><circle cx="24" cy="22" r="7" fill="#b3b3b3"/><path d="M24 17.5 L24 26.5 M19.5 22 L28.5 22" stroke="#232323" stroke-width="2.4"/></svg>
<div class="t" style="left:9.5px;top:743.50px;font-size:20px;line-height:20px;color:#c4c4c4;">项目<span style="white-space:pre;font-size:18px">: </span>未命名</div>
<div style="left:134px;top:749.0px;width:12px;height:2px;background:#c4c4c4;"></div>
<div style="left:134px;top:753.5px;width:12px;height:2px;background:#c4c4c4;"></div>
<div style="left:134px;top:758.0px;width:12px;height:2px;background:#c4c4c4;"></div>
<div style="left:7px;top:768px;width:140px;height:3px;background:#c3c3c3;"></div>
<div class="t" style="left:180.5px;top:743.0px;font-size:20px;line-height:20px;color:#9d9d9d;">媒体浏览器</div>
<div class="t" style="left:344px;top:743.0px;font-size:20px;line-height:20px;color:#9d9d9d;">库</div>
<div class="t" style="left:427px;top:743.0px;font-size:20px;line-height:20px;color:#9d9d9d;">信息</div>
<div class="t" style="left:530px;top:743.0px;font-size:20px;line-height:20px;color:#9d9d9d;">效果</div>
<div class="t" style="left:633px;top:743.0px;font-size:20px;line-height:20px;color:#9d9d9d;">标记</div>
<div style="left:678px;top:736px;width:1px;height:33px;background:#2c2c2c;"></div>
<svg style="position:absolute;left:714.5px;top:745px;" width="16" height="14" viewBox="0 0 16 14"><path d="M2 2 L7 7 L2 12 M9 2 L14 7 L9 12" stroke="#c8c8c8" stroke-width="2.6" fill="none" stroke-linecap="round" stroke-linejoin="round"/></svg>
<svg style="position:absolute;left:10px;top:790px;" width="26" height="20" viewBox="0 0 26 20"><path d="M0.5 1.5 L9 1.5 L10 3 L25 3 L25 19 L0.5 19 Z" fill="#3d3d3d"/><path d="M6 15 L6 9 M3.5 11.5 L6 8.5 L8.5 11.5 M6 15 L14 15" stroke="#232323" stroke-width="1.6" fill="none"/></svg>
<div class="t" style="left:54px;top:789.00px;font-size:19px;line-height:19px;color:#a5a5a5;">未命名<span style="display:inline-block;white-space:pre;font-size:17px;width:51.00px;transform:scaleX(1.0585);transform-origin:0 0">.prproj</span></div>
<div style="left:10px;top:822px;width:300px;height:31px;background:#161616;border:1px solid #2a2a2a;border-radius:4px"></div>
<svg style="position:absolute;left:17px;top:829px;" width="21" height="19" viewBox="0 0 21 19"><circle cx="12.5" cy="7.3" r="5.3" stroke="#c2c2c2" stroke-width="1.9" fill="none"/><path d="M8.6 11.2 L3 16.8" stroke="#c2c2c2" stroke-width="2.6" stroke-linecap="round"/></svg>
<svg style="position:absolute;left:337px;top:827px;" width="23" height="19" viewBox="0 0 23 19"><path d="M0.5 2.5 L0.5 0.8 L7.5 0.8 L7.5 2.5 Z" fill="#b8b8b8"/><rect x="0.5" y="3" width="21.5" height="15" fill="#b8b8b8"/><circle cx="12" cy="9.3" r="3.4" stroke="#232323" stroke-width="1.6" fill="none"/><path d="M9.5 12 L6 15.5" stroke="#232323" stroke-width="2"/></svg>
<div class="t" style="left:687px;top:831.25px;font-size:17px;line-height:17px;color:#a0a0a0;"><span style="white-space:pre;font-size:17px">2</span></div>
<div class="t" style="left:702px;top:828.3px;font-size:19px;line-height:19px;color:#a0a0a0;">项</div>
<div style="left:10px;top:870px;width:708px;height:300px;background:#1e1e1e;border:1px solid #2c2c2c"></div>
<div style="left:11px;top:871px;width:706px;height:28px;background:#262626;"></div>
<div style="left:11px;top:899px;width:706px;height:1px;background:#2e2e2e;"></div>
<div style="left:49px;top:871px;width:2px;height:28px;background:#1d1d1d;"></div>
<div style="left:350px;top:871px;width:2px;height:28px;background:#1d1d1d;"></div>
<div style="left:500px;top:871px;width:2px;height:28px;background:#1d1d1d;"></div>
<div style="left:650px;top:871px;width:2px;height:28px;background:#1d1d1d;"></div>
<div class="t" style="left:58px;top:877.2px;font-size:20px;line-height:20px;color:#a9a9a9;">名称</div>
<div class="t" style="left:358.5px;top:876.6px;font-size:20px;line-height:20px;color:#a9a9a9;">帧速率</div>
<svg style="position:absolute;left:427px;top:883px;" width="19" height="12" viewBox="0 0 19 12"><path d="M2 10 L9 3 L16 10" stroke="#c0c0c0" stroke-width="2.6" fill="none"/></svg>
<div class="t" style="left:507.5px;top:876.6px;font-size:20px;line-height:20px;color:#a9a9a9;">媒体开始</div>
<div style="left:650px;top:870px;width:67px;height:30px;overflow:hidden">
<div class="t" style="left:7.5px;top:6.6px;font-size:20px;line-height:20px;color:#a9a9a9;">媒体结束</div>
</div>
<div style="left:11px;top:936px;width:706px;height:1px;background:#2b2b2b;"></div>
<div style="left:11px;top:972px;width:706px;height:1px;background:#2b2b2b;"></div>
<div style="left:19px;top:906px;width:23px;height:23px;background:#2c2c2c;"></div>
<div style="left:21px;top:908px;width:19px;height:19px;background:#f0aa45;"></div>
<svg style="position:absolute;left:65px;top:911px;" width="8" height="12" viewBox="0 0 8 12"><path d="M1.5 1 L6.5 5.8 L1.5 10.6" stroke="#a0a0a0" stroke-width="1.3" fill="none"/></svg>
<svg style="position:absolute;left:93px;top:910px;" width="24" height="19" viewBox="0 0 24 19"><path d="M1 1.5 L9 1.5 L10 3 L23 3 L23 18 L1 18 Z" fill="#b8b8b8"/><rect x="1" y="4.3" width="22" height="0.9" fill="#232323"/></svg>
<div class="t" style="left:131px;top:910.0px;font-size:20px;line-height:20px;color:#a9a9a9;">动态图形模板媒体</div>
<div style="left:19px;top:942px;width:23px;height:23px;background:#2c2c2c;"></div>
<div style="left:21px;top:944px;width:19px;height:19px;background:#55bb5a;"></div>
<svg style="position:absolute;left:93px;top:944px;" width="25" height="24" viewBox="0 0 25 24"><rect x="1" y="7" width="9" height="4" rx="1" fill="#6c9ee6"/><rect x="13" y="7" width="10" height="4" rx="1" fill="#6c9ee6"/><rect x="4" y="12.5" width="6" height="3.5" rx="1" fill="#6c9ee6"/><rect x="13" y="12.5" width="8" height="3.5" rx="1" fill="#6c9ee6"/><rect x="1" y="18" width="9" height="3.5" rx="1" fill="#2ec27e"/><rect x="13" y="18" width="10" height="3.5" rx="1" fill="#2ec27e"/><rect x="10.8" y="3" width="1.8" height="20" fill="#d8d8d8"/><rect x="10" y="1" width="3.4" height="4" fill="#d8d8d8"/></svg>
<div class="t" style="left:131px;top:947.00px;font-size:19px;line-height:19px;color:#a9a9a9;">序列<span style="display:inline-block;white-space:pre;font-size:16px;width:21.25px;transform:scaleX(0.9552);transform-origin:0 0"> 01</span></div>
<div class="t" style="left:359.5px;top:946.10px;font-size:16px;line-height:16px;color:#a9a9a9;"><span style="display:inline-block;white-space:pre;font-size:16px;width:63.00px;transform:scaleX(0.9570);transform-origin:0 0">25.00 fps</span></div>
<div class="t" style="left:511.5px;top:944.60px;font-size:16px;line-height:16px;color:#a9a9a9;"><span style="display:inline-block;white-space:pre;font-size:16px;width:83.00px;transform:scaleX(0.9820);transform-origin:0 0">00:00:00:00</span></div>
<div style="left:650px;top:936px;width:67px;height:36px;overflow:hidden">
<div class="t" style="left:11.4px;top:8.60px;font-size:16px;line-height:16px;color:#a9a9a9;"><span style="display:inline-block;white-space:pre;font-size:16px;width:83.00px;transform:scaleX(0.9820);transform-origin:0 0">00:00:00:00</span></div>
</div>
<div style="left:13px;top:1152px;width:140px;height:15px;background:#333333;border-radius:7px"></div>
<svg style="position:absolute;left:10px;top:1198px;" width="24" height="23" viewBox="0 0 24 23"><path d="M4 16 L16.5 3.5 L21 8 L8.5 20.5 L2.5 22 Z" fill="#23a523"/><path d="M2.5 22 L4 16 L8.5 20.5 Z" fill="#0d4a0d"/><path d="M3.6 20.8 L4.3 18.2 L6.3 20.2 Z" fill="#23a523"/></svg>
<svg style="position:absolute;left:54px;top:1200px;" width="27" height="18" viewBox="0 0 27 18"><rect x="1" y="1" width="10" height="7" rx="1" fill="#2d8ceb"/><rect x="1" y="10" width="10" height="7" rx="1" fill="#2d8ceb"/><rect x="13" y="3.5" width="13" height="2" fill="#2d8ceb"/><rect x="13" y="12.5" width="13" height="2" fill="#2d8ceb"/></svg>
<svg style="position:absolute;left:104px;top:1200px;" width="18" height="18" viewBox="0 0 18 18"><rect x="1" y="1" width="15.5" height="12" fill="#b3b3b3"/><rect x="1" y="15" width="15.5" height="2" fill="#b3b3b3"/></svg>
<svg style="position:absolute;left:143px;top:1200px;" width="30" height="18" viewBox="0 0 30 18"><rect x="1" y="1" width="15" height="10" stroke="#b3b3b3" stroke-width="1.6" fill="#232323"/><rect x="5" y="4" width="15" height="10" stroke="#b3b3b3" stroke-width="1.6" fill="#232323"/><rect x="10" y="7" width="18" height="10.5" fill="#b3b3b3"/></svg>
<svg style="position:absolute;left:189px;top:1201px;" width="17" height="17" viewBox="0 0 17 17"><circle cx="8.5" cy="8.2" r="5.8" stroke="#9c9c9c" stroke-width="3" fill="#232323"/></svg>
<div style="left:208px;top:1208px;width:84px;height:3px;background:#444444;"></div>
<svg style="position:absolute;left:320px;top:1199px;" width="25" height="20" viewBox="0 0 25 20"><rect x="1" y="1" width="22" height="3" rx="1.5" fill="#4a4a4a"/><rect x="1" y="8.3" width="18" height="3" rx="1.5" fill="#4a4a4a"/><rect x="1" y="15.6" width="15" height="3" rx="1.5" fill="#4a4a4a"/></svg>
<svg style="position:absolute;left:359px;top:1204px;" width="15" height="9" viewBox="0 0 15 9"><path d="M1 1.5 L7.3 7 L13.5 1.5" stroke="#444" stroke-width="1.2" fill="none"/></svg>
<svg style="position:absolute;left:498px;top:1202px;" width="26" height="14" viewBox="0 0 26 14"><rect x="1" y="1" width="7" height="12.5" fill="#4a4a4a"/><rect x="10" y="3" width="5" height="10.5" fill="#4a4a4a"/><rect x="17" y="4.5" width="3" height="9" fill="#4a4a4a"/><rect x="21.5" y="6" width="1.8" height="7.5" fill="#4a4a4a"/></svg>
<svg style="position:absolute;left:545px;top:1199px;" width="21" height="20" viewBox="0 0 21 20"><circle cx="12.5" cy="7.8" r="5.6" stroke="#b3b3b3" stroke-width="2.2" fill="none"/><path d="M8.5 11.8 L2.8 17.5" stroke="#b3b3b3" stroke-width="3" stroke-linecap="round"/></svg>
<svg style="position:absolute;left:589px;top:1199px;" width="23" height="18" viewBox="0 0 23 18"><path d="M1 1.2 L8.5 1.2 L9.5 3 L21.5 3 L21.5 16.5 L1 16.5 Z" fill="#b3b3b3"/><rect x="1" y="4.2" width="20.5" height="0.9" fill="#232323"/></svg>
<svg style="position:absolute;left:637px;top:1199px;" width="19" height="18" viewBox="0 0 19 18"><path d="M4.5 1 L17.5 1 L17.5 16.5 L4.5 16.5 Z" fill="#b3b3b3"/><path d="M0.5 6 L6 6 L6 11.5 Z" fill="#b3b3b3"/><path d="M1.5 5.8 L6.2 5.8 L6.2 10.5" stroke="#232323" stroke-width="1.2" fill="none"/></svg>
<svg style="position:absolute;left:680px;top:1198px;" width="20" height="21" viewBox="0 0 20 21"><rect x="6" y="0.8" width="7" height="2" fill="#4a4a4a"/><rect x="1" y="3" width="17" height="2" fill="#4a4a4a"/><path d="M3 5.5 L3 19.5 L16 19.5 L16 5.5" stroke="#4a4a4a" stroke-width="1.8" fill="none"/><path d="M6.5 7 L6.5 17 M9.5 7 L9.5 17 M12.5 7 L12.5 17" stroke="#4a4a4a" stroke-width="1.3"/></svg>
<div style="left:758px;top:757px;width:41px;height:38px;background:#141414;border:1px solid #2a2a2a;border-radius:4px"></div>
<svg style="position:absolute;left:770px;top:764px;" width="21" height="27" viewBox="0 0 21 27"><path d="M0.8 0.8 L19.2 18 L7.5 16.5 L0.8 26 Z" fill="#2d8ceb"/></svg>
<svg style="position:absolute;left:764px;top:806px;" width="28" height="19" viewBox="0 0 28 19"><rect x="1.8" y="1.8" width="13" height="15" stroke="#b3b3b3" stroke-width="2" stroke-dasharray="3 2.2" fill="none"/><path d="M9.5 7.2 L18.5 7.2 L18.5 3.5 L26.5 9.8 L18.5 16 L18.5 12.3 L9.5 12.3 Z" fill="#b3b3b3"/></svg>
<svg style="position:absolute;left:791px;top:827.5px;" width="6" height="6" viewBox="0 0 6 6"><path d="M5.5 0 L5.5 5.5 L0 5.5 Z" fill="#8a8a8a"/></svg>
<svg style="position:absolute;left:763px;top:846px;" width="31" height="23" viewBox="0 0 31 23"><rect x="13.6" y="0.5" width="3.2" height="22" fill="#b3b3b3"/><path d="M0.5 11.5 L11 4 L11 19 Z" fill="#b3b3b3"/><path d="M30 11.5 L19.5 4 L19.5 19 Z" fill="#b3b3b3"/><rect x="10" y="9.6" width="10.5" height="3" fill="#b3b3b3"/></svg>
<svg style="position:absolute;left:791px;top:868px;" width="6" height="6" viewBox="0 0 6 6"><path d="M5.5 0 L5.5 5.5 L0 5.5 Z" fill="#8a8a8a"/></svg>
<svg style="position:absolute;left:765px;top:886px;" width="27" height="25" viewBox="0 0 27 25"><g transform="rotate(38 13.5 12.5)"><rect x="1.5" y="6.5" width="24" height="12" rx="1.5" fill="#b3b3b3"/><path d="M5 12.5 L22 12.5" stroke="#232323" stroke-width="1.4"/><circle cx="13.5" cy="12.5" r="1.6" fill="#232323"/></g></svg>
<svg style="position:absolute;left:762px;top:928px;" width="33" height="22" viewBox="0 0 33 22"><rect x="1" y="0.5" width="3.2" height="21" rx="1" fill="#b3b3b3"/><rect x="28.5" y="0.5" width="3.2" height="21" rx="1" fill="#b3b3b3"/><path d="M6 10.8 L11.5 6 L11.5 15.6 Z" fill="#b3b3b3"/><path d="M26.5 10.8 L21 6 L21 15.6 Z" fill="#b3b3b3"/><rect x="10" y="9.8" width="12.5" height="2" fill="#b3b3b3"/></svg>
<svg style="position:absolute;left:791px;top:949.5px;" width="6" height="6" viewBox="0 0 6 6"><path d="M5.5 0 L5.5 5.5 L0 5.5 Z" fill="#8a8a8a"/></svg>
<svg style="position:absolute;left:765px;top:966px;" width="26" height="26" viewBox="0 0 26 26"><g transform="rotate(45 13 13)"><rect x="9" y="-1" width="8" height="5" fill="#b3b3b3"/><path d="M7 6 L19 6 L21 12 L13 27 L5 12 Z" fill="#b3b3b3"/><path d="M13 14 L13 26" stroke="#232323" stroke-width="1.2"/><circle cx="13" cy="14" r="1.5" fill="#232323"/></g></svg>
<svg style="position:absolute;left:791px;top:990px;" width="6" height="6" viewBox="0 0 6 6"><path d="M5.5 0 L5.5 5.5 L0 5.5 Z" fill="#8a8a8a"/></svg>
<svg style="position:absolute;left:765px;top:1006px;" width="27" height="26" viewBox="0 0 27 26"><path d="M7 13 L7 4 A1.8 1.8 0 0 1 10.6 4 L10.6 11 L10.6 2.3 A1.8 1.8 0 0 1 14.2 2.3 L14.2 11 L14.2 3.2 A1.8 1.8 0 0 1 17.8 3.2 L17.8 12 L19.5 7.5 A1.8 1.8 0 0 1 23 8.8 L20 19 C18.5 23.5 16 25 13 25 C9.5 25 7.5 23 5.5 20 L1.5 14.5 A1.8 1.8 0 0 1 4.5 12.5 Z" fill="#b3b3b3"/></svg>
<svg style="position:absolute;left:791px;top:1030px;" width="6" height="6" viewBox="0 0 6 6"><path d="M5.5 0 L5.5 5.5 L0 5.5 Z" fill="#8a8a8a"/></svg>
<svg style="position:absolute;left:767px;top:1048px;" width="23" height="23" viewBox="0 0 23 23"><path d="M1 1 L22 1 L22 7 L19.5 7 L19.5 3.8 L13 3.8 L13 19 L16.5 19 L16.5 21.8 L6.5 21.8 L6.5 19 L10 19 L10 3.8 L3.5 3.8 L3.5 7 L1 7 Z" fill="#b3b3b3"/></svg>
<svg style="position:absolute;left:791px;top:1070.5px;" width="6" height="6" viewBox="0 0 6 6"><path d="M5.5 0 L5.5 5.5 L0 5.5 Z" fill="#8a8a8a"/></svg>
<div style="left:824px;top:732px;width:1168px;height:491px;background:#232323;border:1px solid #2d8ceb;border-bottom:none"></div>
<svg style="position:absolute;left:840px;top:750px;" width="10" height="10" viewBox="0 0 10 10"><path d="M1 1 L9 9 M9 1 L1 9" stroke="#b0b0b0" stroke-width="1.4"/></svg>
<div class="t" style="left:865px;top:743.50px;font-size:20px;line-height:20px;color:#c0c0c0;">序列<span style="display:inline-block;white-space:pre;font-size:18.5px;width:23.15px;transform:scaleX(0.9000);transform-origin:0 0"> 01</span></div>
<div style="left:946px;top:749.3px;width:12.5px;height:2px;background:#c4c4c4;"></div>
<div style="left:946px;top:753.6px;width:12.5px;height:2px;background:#c4c4c4;"></div>
<div style="left:946px;top:758.0px;width:12.5px;height:2px;background:#c4c4c4;"></div>
<div class="t" style="left:850.5px;top:785.15px;font-size:23px;line-height:23px;color:#2d8ceb;-webkit-text-stroke:0.55px #2d8ceb"><span style="display:inline-block;white-space:pre;font-size:23px;width:123.00px;transform:scaleX(1.0122);transform-origin:0 0">00:00:00:07</span></div>
<svg style="position:absolute;left:855px;top:815px;" width="24" height="23" viewBox="0 0 24 23"><rect x="8.5" y="0.8" width="5" height="3" rx="1" fill="#2d8ceb"/><rect x="10.2" y="3" width="1.6" height="6" fill="#2d8ceb"/><rect x="13" y="7" width="9" height="3" rx="1" fill="#2d8ceb"/><rect x="0.5" y="12" width="9" height="3" rx="1" fill="#2d8ceb"/><rect x="13" y="12" width="5" height="3" rx="1" fill="#2d8ceb"/><rect x="5" y="17" width="6" height="3" rx="1" fill="#2d8ceb"/><rect x="15" y="17" width="7" height="3" rx="1" fill="#2d8ceb"/><rect x="10.2" y="12" width="1.6" height="10" fill="#2d8ceb"/><path d="M2 4 L22 22" stroke="#2d8ceb" stroke-width="1.6"/><path d="M2.5 2.8 L23 23.2" stroke="#232323" stroke-width="0.9"/></svg>
<svg style="position:absolute;left:909px;top:817px;" width="19" height="19" viewBox="0 0 19 19"><path d="M1 18.5 L1 9 A8.3 8.3 0 0 1 17.6 9 L17.6 18.5 L13 18.5 L13 9 A3.8 3.8 0 0 0 5.6 9 L5.6 18.5 Z" fill="#2d8ceb"/><rect x="1" y="12.5" width="4.6" height="6" fill="#1f5f9f"/><rect x="13" y="12.5" width="4.6" height="6" fill="#1f5f9f"/></svg>
<svg style="position:absolute;left:957px;top:817px;" width="24" height="22" viewBox="0 0 24 22"><rect x="1" y="1" width="7" height="9" fill="#2d8ceb"/><rect x="1" y="12" width="7" height="8.5" fill="#2d8ceb"/><path d="M3 13.5 L3 19 L7 19" stroke="#232323" stroke-width="1.2" fill="none"/><path d="M9.5 1 L22.5 1 L22.5 13.5 L20 13.5 L9.5 21 Z" fill="#2d8ceb"/><path d="M9.8 1.5 L19 13" stroke="#232323" stroke-width="1"/></svg>
<svg style="position:absolute;left:1014px;top:820px;" width="14" height="15" viewBox="0 0 14 15"><path d="M1 1 L13 1 L13 9.5 L7 14.5 L1 9.5 Z" fill="#b3b3b3"/></svg>
<svg style="position:absolute;left:1060px;top:815px;" width="23" height="23" viewBox="0 0 23 23"><g transform="scale(1.0)"><path d="M3 6.5 A5.5 5.5 0 0 0 10.5 11.5 L18.5 20 A2 2 0 0 0 21.5 17.5 L13.2 9 A5.5 5.5 0 0 0 6.5 1.5 L9.5 4.8 L8 8 L5 8.6 Z" fill="#b3b3b3"/></g></svg>
<svg style="position:absolute;left:1109px;top:819px;" width="26" height="17" viewBox="0 0 26 17"><rect x="0.5" y="0.5" width="25" height="16" rx="3" fill="#3c3c3c"/><path d="M10.5 5 A4.2 4.2 0 1 0 10.5 12 M20.5 5 A4.2 4.2 0 1 0 20.5 12" stroke="#232323" stroke-width="2.4" fill="none"/></svg>
<div style="left:825px;top:840px;width:18px;height:1px;background:#151515;"></div>
<div class="t" style="left:1179.5px;top:800.73px;font-size:16.5px;line-height:16.5px;color:#a9a9a9;"><span style="display:inline-block;white-space:pre;font-size:16.5px;width:44.00px;transform:scaleX(0.9591);transform-origin:0 0">:00:00</span></div>
<div class="t" style="left:1620px;top:800.73px;font-size:16.5px;line-height:16.5px;color:#a9a9a9;"><span style="display:inline-block;white-space:pre;font-size:16.5px;width:84.00px;transform:scaleX(0.9637);transform-origin:0 0">00:00:01:00</span></div>
<div style="left:1179px;top:821px;width:1px;height:17px;background:#6a6a6a;"></div>
<div style="left:1275px;top:830px;width:1px;height:8px;background:#6a6a6a;"></div>
<div style="left:1371px;top:830px;width:1px;height:8px;background:#6a6a6a;"></div>
<div style="left:1467px;top:830px;width:1px;height:8px;background:#6a6a6a;"></div>
<div style="left:1563px;top:830px;width:1px;height:8px;background:#6a6a6a;"></div>
<div style="left:1659px;top:821px;width:1px;height:17px;background:#6a6a6a;"></div>
<div style="left:1755px;top:830px;width:1px;height:8px;background:#6a6a6a;"></div>
<div style="left:1851px;top:830px;width:1px;height:8px;background:#6a6a6a;"></div>
<div style="left:1947px;top:830px;width:1px;height:8px;background:#6a6a6a;"></div>
<div style="left:1284px;top:776px;width:2px;height:61px;background:#8a8a8a;"></div>
<div style="left:1179px;top:839px;width:345px;height:3px;background:#f52d1f;"></div>
<div style="left:1313px;top:838px;width:1px;height:362px;background:#2d8ceb;"></div>
<svg style="position:absolute;left:1304px;top:819px;" width="36" height="21" viewBox="0 0 36 21"><path d="M1 1 L17.3 1 L17.3 13.5 L11.5 19.5 L7 19.5 L1 13.5 Z" fill="#2d8ceb"/><path d="M13 15 L34 15 L34 16.5 L32 19 L13 19 Z" fill="#2d8ceb"/><rect x="8.8" y="13.5" width="1.3" height="6" fill="#111"/></svg>
<div style="left:1178px;top:842px;width:1px;height:358px;background:#1c1c1c;"></div>
<div style="left:825px;top:906px;width:1130px;height:2px;background:#2f2f2f;"></div>
<div style="left:825px;top:943px;width:1130px;height:2px;background:#2f2f2f;"></div>
<div style="left:825px;top:981px;width:1130px;height:2px;background:#2f2f2f;"></div>
<div style="left:825px;top:1061px;width:1130px;height:2px;background:#2f2f2f;"></div>
<div style="left:825px;top:1099px;width:1130px;height:2px;background:#2f2f2f;"></div>
<div style="left:825px;top:1136px;width:1130px;height:2px;background:#2f2f2f;"></div>
<div style="left:825px;top:1174px;width:1130px;height:2px;background:#2f2f2f;"></div>
<div style="left:825px;top:1018px;width:1150px;height:7px;background:#2e2e2e;"></div>
<div style="left:969px;top:908px;width:81px;height:35px;background:#262626;"></div>
<div style="left:969px;top:945px;width:81px;height:36px;background:#262626;"></div>
<div style="left:969px;top:983px;width:81px;height:35px;background:#262626;"></div>
<div style="left:969px;top:1025px;width:40px;height:36px;background:#262626;"></div>
<div style="left:969px;top:1063px;width:40px;height:36px;background:#262626;"></div>
<div style="left:969px;top:1101px;width:40px;height:35px;background:#262626;"></div>
<div style="left:843px;top:982px;width:48px;height:36px;background:#0a5485;"></div>
<div style="left:921px;top:982px;width:48px;height:36px;background:#0a5485;"></div>
<div style="left:921px;top:1025px;width:48px;height:36px;background:#0a5485;"></div>
<div style="left:921px;top:1063px;width:48px;height:36px;background:#0a5485;"></div>
<div style="left:921px;top:1101px;width:48px;height:35px;background:#0a5485;"></div>
<svg style="position:absolute;left:899px;top:916px;" width="15" height="17" viewBox="0 0 15 17"><path d="M3.5 7 L3.5 5 A4.2 4.2 0 0 1 11.5 3" stroke="#b3b3b3" stroke-width="1.8" fill="none"/><rect x="1" y="7.5" width="12.5" height="8.5" rx="1" fill="#b3b3b3"/><circle cx="7.2" cy="10.8" r="1.6" fill="#232323"/><rect x="6.5" y="11" width="1.4" height="3" fill="#232323"/></svg>
<div class="t" style="left:935.5px;top:917.17px;font-size:15.5px;line-height:15.5px;color:#c8c8c8;"><span style="display:inline-block;white-space:pre;font-size:15.5px;width:17.06px;transform:scaleX(0.9000);transform-origin:0 0">V3</span></div>
<svg style="position:absolute;left:980px;top:917.5px;" width="20" height="15" viewBox="0 0 20 15"><rect x="1.2" y="1.2" width="11" height="5.3" stroke="#b3b3b3" stroke-width="1.8" fill="none"/><rect x="1.2" y="8.5" width="11" height="5.3" stroke="#b3b3b3" stroke-width="1.8" fill="none"/><path d="M12.5 3.5 L18 3.5 L18 11 L12.5 11" stroke="#b3b3b3" stroke-width="2.2" fill="none"/></svg>
<svg style="position:absolute;left:1019px;top:918.5px;" width="22" height="14" viewBox="0 0 22 14"><path d="M1 7 Q11 -3 21 7 Q11 17 1 7 Z" fill="#b3b3b3"/><circle cx="11" cy="7" r="4" fill="#1c1c1c"/><circle cx="12.3" cy="5.4" r="0.9" fill="#b3b3b3"/></svg>
<svg style="position:absolute;left:899px;top:953px;" width="15" height="17" viewBox="0 0 15 17"><path d="M3.5 7 L3.5 5 A4.2 4.2 0 0 1 11.5 3" stroke="#b3b3b3" stroke-width="1.8" fill="none"/><rect x="1" y="7.5" width="12.5" height="8.5" rx="1" fill="#b3b3b3"/><circle cx="7.2" cy="10.8" r="1.6" fill="#232323"/><rect x="6.5" y="11" width="1.4" height="3" fill="#232323"/></svg>
<div class="t" style="left:935.5px;top:954.17px;font-size:15.5px;line-height:15.5px;color:#c8c8c8;"><span style="display:inline-block;white-space:pre;font-size:15.5px;width:17.06px;transform:scaleX(0.9000);transform-origin:0 0">V2</span></div>
<svg style="position:absolute;left:980px;top:954.5px;" width="20" height="15" viewBox="0 0 20 15"><rect x="1.2" y="1.2" width="11" height="5.3" stroke="#b3b3b3" stroke-width="1.8" fill="none"/><rect x="1.2" y="8.5" width="11" height="5.3" stroke="#b3b3b3" stroke-width="1.8" fill="none"/><path d="M12.5 3.5 L18 3.5 L18 11 L12.5 11" stroke="#b3b3b3" stroke-width="2.2" fill="none"/></svg>
<svg style="position:absolute;left:1019px;top:955.5px;" width="22" height="14" viewBox="0 0 22 14"><path d="M1 7 Q11 -3 21 7 Q11 17 1 7 Z" fill="#b3b3b3"/><circle cx="11" cy="7" r="4" fill="#1c1c1c"/><circle cx="12.3" cy="5.4" r="0.9" fill="#b3b3b3"/></svg>
<svg style="position:absolute;left:899px;top:991px;" width="15" height="17" viewBox="0 0 15 17"><path d="M3.5 7 L3.5 5 A4.2 4.2 0 0 1 11.5 3" stroke="#b3b3b3" stroke-width="1.8" fill="none"/><rect x="1" y="7.5" width="12.5" height="8.5" rx="1" fill="#b3b3b3"/><circle cx="7.2" cy="10.8" r="1.6" fill="#232323"/><rect x="6.5" y="11" width="1.4" height="3" fill="#232323"/></svg>
<div class="t" style="left:935.5px;top:992.17px;font-size:15.5px;line-height:15.5px;color:#c8c8c8;"><span style="display:inline-block;white-space:pre;font-size:15.5px;width:17.06px;transform:scaleX(0.9000);transform-origin:0 0">V1</span></div>
<svg style="position:absolute;left:980px;top:992.5px;" width="20" height="15" viewBox="0 0 20 15"><rect x="1.2" y="1.2" width="11" height="5.3" stroke="#b3b3b3" stroke-width="1.8" fill="none"/><rect x="1.2" y="8.5" width="11" height="5.3" stroke="#b3b3b3" stroke-width="1.8" fill="none"/><path d="M12.5 3.5 L18 3.5 L18 11 L12.5 11" stroke="#b3b3b3" stroke-width="2.2" fill="none"/></svg>
<svg style="position:absolute;left:1019px;top:993.5px;" width="22" height="14" viewBox="0 0 22 14"><path d="M1 7 Q11 -3 21 7 Q11 17 1 7 Z" fill="#b3b3b3"/><circle cx="11" cy="7" r="4" fill="#1c1c1c"/><circle cx="12.3" cy="5.4" r="0.9" fill="#b3b3b3"/></svg>
<div class="t" style="left:857.5px;top:992.17px;font-size:15.5px;line-height:15.5px;color:#c8c8c8;"><span style="display:inline-block;white-space:pre;font-size:15.5px;width:17.06px;transform:scaleX(0.9000);transform-origin:0 0">V1</span></div>
<svg style="position:absolute;left:899px;top:1034.0px;" width="15" height="17" viewBox="0 0 15 17"><path d="M3.5 7 L3.5 5 A4.2 4.2 0 0 1 11.5 3" stroke="#b3b3b3" stroke-width="1.8" fill="none"/><rect x="1" y="7.5" width="12.5" height="8.5" rx="1" fill="#b3b3b3"/><circle cx="7.2" cy="10.8" r="1.6" fill="#232323"/><rect x="6.5" y="11" width="1.4" height="3" fill="#232323"/></svg>
<div class="t" style="left:935.5px;top:1036.17px;font-size:15.5px;line-height:15.5px;color:#c8c8c8;"><span style="display:inline-block;white-space:pre;font-size:15.5px;width:17.06px;transform:scaleX(0.9000);transform-origin:0 0">A1</span></div>
<svg style="position:absolute;left:980px;top:1035.5px;" width="20" height="15" viewBox="0 0 20 15"><rect x="1.2" y="1.2" width="11" height="5.3" stroke="#b3b3b3" stroke-width="1.8" fill="none"/><rect x="1.2" y="8.5" width="11" height="5.3" stroke="#b3b3b3" stroke-width="1.8" fill="none"/><path d="M12.5 3.5 L18 3.5 L18 11 L12.5 11" stroke="#b3b3b3" stroke-width="2.2" fill="none"/></svg>
<svg style="position:absolute;left:1023px;top:1038.5px;" width="14" height="12" viewBox="0 0 14 12"><path d="M1.5 11 L1.5 1.5 L7 8 L12.5 1.5 L12.5 11" stroke="#b3b3b3" stroke-width="1.7" fill="none"/></svg>
<svg style="position:absolute;left:1066px;top:1038.5px;" width="10" height="12" viewBox="0 0 10 12"><path d="M8.8 1.8 Q8 1 5 1 Q1.5 1 1.5 3.3 Q1.5 5 5 5.8 Q8.5 6.6 8.5 8.6 Q8.5 11 5 11 Q2 11 1 10" stroke="#b3b3b3" stroke-width="1.6" fill="none"/></svg>
<svg style="position:absolute;left:1103.5px;top:1032.5px;" width="15" height="23" viewBox="0 0 15 23"><rect x="4" y="0.8" width="7" height="13" rx="3.5" fill="#b3b3b3"/><path d="M1.5 9.5 A6 6 0 0 0 13.5 9.5" stroke="#b3b3b3" stroke-width="1.6" fill="none"/><rect x="6.6" y="15.5" width="1.8" height="5" fill="#b3b3b3"/><rect x="3" y="20" width="9" height="1.8" fill="#b3b3b3"/></svg>
<svg style="position:absolute;left:899px;top:1072.0px;" width="15" height="17" viewBox="0 0 15 17"><path d="M3.5 7 L3.5 5 A4.2 4.2 0 0 1 11.5 3" stroke="#b3b3b3" stroke-width="1.8" fill="none"/><rect x="1" y="7.5" width="12.5" height="8.5" rx="1" fill="#b3b3b3"/><circle cx="7.2" cy="10.8" r="1.6" fill="#232323"/><rect x="6.5" y="11" width="1.4" height="3" fill="#232323"/></svg>
<div class="t" style="left:935.5px;top:1074.17px;font-size:15.5px;line-height:15.5px;color:#c8c8c8;"><span style="display:inline-block;white-space:pre;font-size:15.5px;width:17.06px;transform:scaleX(0.9000);transform-origin:0 0">A2</span></div>
<svg style="position:absolute;left:980px;top:1073.5px;" width="20" height="15" viewBox="0 0 20 15"><rect x="1.2" y="1.2" width="11" height="5.3" stroke="#b3b3b3" stroke-width="1.8" fill="none"/><rect x="1.2" y="8.5" width="11" height="5.3" stroke="#b3b3b3" stroke-width="1.8" fill="none"/><path d="M12.5 3.5 L18 3.5 L18 11 L12.5 11" stroke="#b3b3b3" stroke-width="2.2" fill="none"/></svg>
<svg style="position:absolute;left:1023px;top:1076.5px;" width="14" height="12" viewBox="0 0 14 12"><path d="M1.5 11 L1.5 1.5 L7 8 L12.5 1.5 L12.5 11" stroke="#b3b3b3" stroke-width="1.7" fill="none"/></svg>
<svg style="position:absolute;left:1066px;top:1076.5px;" width="10" height="12" viewBox="0 0 10 12"><path d="M8.8 1.8 Q8 1 5 1 Q1.5 1 1.5 3.3 Q1.5 5 5 5.8 Q8.5 6.6 8.5 8.6 Q8.5 11 5 11 Q2 11 1 10" stroke="#b3b3b3" stroke-width="1.6" fill="none"/></svg>
<svg style="position:absolute;left:1103.5px;top:1070.5px;" width="15" height="23" viewBox="0 0 15 23"><rect x="4" y="0.8" width="7" height="13" rx="3.5" fill="#b3b3b3"/><path d="M1.5 9.5 A6 6 0 0 0 13.5 9.5" stroke="#b3b3b3" stroke-width="1.6" fill="none"/><rect x="6.6" y="15.5" width="1.8" height="5" fill="#b3b3b3"/><rect x="3" y="20" width="9" height="1.8" fill="#b3b3b3"/></svg>
<svg style="position:absolute;left:899px;top:1110.0px;" width="15" height="17" viewBox="0 0 15 17"><path d="M3.5 7 L3.5 5 A4.2 4.2 0 0 1 11.5 3" stroke="#b3b3b3" stroke-width="1.8" fill="none"/><rect x="1" y="7.5" width="12.5" height="8.5" rx="1" fill="#b3b3b3"/><circle cx="7.2" cy="10.8" r="1.6" fill="#232323"/><rect x="6.5" y="11" width="1.4" height="3" fill="#232323"/></svg>
<div class="t" style="left:935.5px;top:1112.17px;font-size:15.5px;line-height:15.5px;color:#c8c8c8;"><span style="display:inline-block;white-space:pre;font-size:15.5px;width:17.06px;transform:scaleX(0.9000);transform-origin:0 0">A3</span></div>
<svg style="position:absolute;left:980px;top:1111.5px;" width="20" height="15" viewBox="0 0 20 15"><rect x="1.2" y="1.2" width="11" height="5.3" stroke="#b3b3b3" stroke-width="1.8" fill="none"/><rect x="1.2" y="8.5" width="11" height="5.3" stroke="#b3b3b3" stroke-width="1.8" fill="none"/><path d="M12.5 3.5 L18 3.5 L18 11 L12.5 11" stroke="#b3b3b3" stroke-width="2.2" fill="none"/></svg>
<svg style="position:absolute;left:1023px;top:1114.5px;" width="14" height="12" viewBox="0 0 14 12"><path d="M1.5 11 L1.5 1.5 L7 8 L12.5 1.5 L12.5 11" stroke="#b3b3b3" stroke-width="1.7" fill="none"/></svg>
<svg style="position:absolute;left:1066px;top:1114.5px;" width="10" height="12" viewBox="0 0 10 12"><path d="M8.8 1.8 Q8 1 5 1 Q1.5 1 1.5 3.3 Q1.5 5 5 5.8 Q8.5 6.6 8.5 8.6 Q8.5 11 5 11 Q2 11 1 10" stroke="#b3b3b3" stroke-width="1.6" fill="none"/></svg>
<svg style="position:absolute;left:1103.5px;top:1108.5px;" width="15" height="23" viewBox="0 0 15 23"><rect x="4" y="0.8" width="7" height="13" rx="3.5" fill="#b3b3b3"/><path d="M1.5 9.5 A6 6 0 0 0 13.5 9.5" stroke="#b3b3b3" stroke-width="1.6" fill="none"/><rect x="6.6" y="15.5" width="1.8" height="5" fill="#b3b3b3"/><rect x="3" y="20" width="9" height="1.8" fill="#b3b3b3"/></svg>
<svg style="position:absolute;left:899px;top:1146px;" width="15" height="17" viewBox="0 0 15 17"><path d="M3.5 7 L3.5 5 A4.2 4.2 0 0 1 11.5 3" stroke="#b3b3b3" stroke-width="1.8" fill="none"/><rect x="1" y="7.5" width="12.5" height="8.5" rx="1" fill="#b3b3b3"/><circle cx="7.2" cy="10.8" r="1.6" fill="#232323"/><rect x="6.5" y="11" width="1.4" height="3" fill="#232323"/></svg>
<div class="t" style="left:925.5px;top:1146.0px;font-size:20px;line-height:20px;color:#a5a5a5;">混合</div>
<div class="t" style="left:1042px;top:1147.70px;font-size:16px;line-height:16px;color:#2d8ceb;"><span style="display:inline-block;white-space:pre;font-size:16px;width:20.69px;transform:scaleX(0.9300);transform-origin:0 0">0.0</span></div>
<svg style="position:absolute;left:1148px;top:1141px;" width="20" height="16" viewBox="0 0 20 16"><path d="M1 1 L9 8 L1 15 Z M19 1 L11 8 L19 15 Z" fill="#b3b3b3"/></svg>
<svg style="position:absolute;left:1179px;top:982px;" width="345" height="36" viewBox="0 0 345 36"><rect x="0" y="0" width="345" height="36" fill="#e4e4e4"/><rect x="6" y="6" width="332" height="23.5" fill="#f46fa7"/><path d="M0 0 L7 0 L0 7 Z" fill="#2a2a2a"/><path d="M0.5 6.5 L6.5 0.5" stroke="#555" stroke-width="1"/><path d="M345 0 L338 0 L345 7 Z" fill="#2a2a2a"/><path d="M344.5 6.5 L338.5 0.5" stroke="#555" stroke-width="1"/></svg>
<div style="left:1194px;top:987px;width:18px;height:16px;background:#e8c21e;border:1px solid #b9a14a"></div>
<div class="t" style="left:1196.5px;top:986.50px;font-size:15px;line-height:15px;color:#4a3a10;font-style:italic"><span style="white-space:pre;font-size:15px">fx</span></div>
<div class="t" style="left:1223.5px;top:987.17px;font-size:15.5px;line-height:15.5px;color:#1a1a1a;"><span style="display:inline-block;white-space:pre;font-size:15.5px;width:204.00px;transform:scaleX(0.8900);transform-origin:0 0">Lightning and Energy Element 01</span></div>
<div style="left:1313px;top:982px;width:1px;height:36px;background:#2d8ceb;"></div>
<div style="left:1958px;top:846px;width:14px;height:172px;background:#2e2e2e;border-radius:7px"></div>
<div style="left:1958px;top:1026px;width:14px;height:172px;background:#2e2e2e;border-radius:7px"></div>
<svg style="position:absolute;left:1956px;top:847px;" width="18" height="18" viewBox="0 0 18 18"><circle cx="9" cy="9" r="6" stroke="#9a9a9a" stroke-width="3" fill="#2e2e2e"/></svg>
<svg style="position:absolute;left:1956px;top:1000px;" width="18" height="18" viewBox="0 0 18 18"><circle cx="9" cy="9" r="6" stroke="#9a9a9a" stroke-width="3" fill="#2e2e2e"/></svg>
<svg style="position:absolute;left:1956px;top:1025px;" width="18" height="18" viewBox="0 0 18 18"><circle cx="9" cy="9" r="6" stroke="#9a9a9a" stroke-width="3" fill="#2e2e2e"/></svg>
<svg style="position:absolute;left:1956px;top:1180.5px;" width="18" height="18" viewBox="0 0 18 18"><circle cx="9" cy="9" r="6" stroke="#9a9a9a" stroke-width="3" fill="#2e2e2e"/></svg>
<div style="left:1955px;top:838px;width:35px;height:2px;background:#1b1b1b;"></div>
<div style="left:842px;top:1202px;width:1113px;height:14px;background:#292929;border-radius:7px"></div>
<div style="left:846px;top:1202px;width:66px;height:14px;background:#333333;border-radius:7px"></div>
<svg style="position:absolute;left:842.7px;top:1200.6px;" width="18" height="18" viewBox="0 0 18 18"><circle cx="9" cy="9" r="6" stroke="#9a9a9a" stroke-width="3" fill="#333"/></svg>
<svg style="position:absolute;left:897.5px;top:1200.6px;" width="18" height="18" viewBox="0 0 18 18"><circle cx="9" cy="9" r="6" stroke="#9a9a9a" stroke-width="3" fill="#333"/></svg>
<div style="left:2016px;top:772px;width:40px;height:416px;background:#1f1f1f;border:1.5px solid #0c0c0c"></div>
<div style="left:2017px;top:786px;width:38px;height:1.5px;background:#0c0c0c;"></div>
<div style="left:2035px;top:772px;width:1.5px;height:15px;background:#111;"></div>
<div style="left:2017px;top:1183px;width:17px;height:2px;background:#e3e330;"></div>
<div style="left:2036px;top:1183px;width:18px;height:2px;background:#e3e330;"></div>
<div style="left:2017px;top:1193px;width:17px;height:27px;background:#262626;border:1px solid #333;border-radius:2px"></div>
<svg style="position:absolute;left:2021px;top:1200px;" width="10" height="13" viewBox="0 0 10 13"><path d="M8.8 1.8 Q8 1 5 1 Q1.5 1 1.5 3.3 Q1.5 5 5 5.8 Q8.5 6.6 8.5 8.6 Q8.5 11 5 11 Q2 11 1 10" stroke="#a8a8a8" stroke-width="1.4" fill="none"/></svg>
<div style="left:2036px;top:1193px;width:17px;height:27px;background:#262626;border:1px solid #333;border-radius:2px"></div>
<svg style="position:absolute;left:2040px;top:1200px;" width="10" height="13" viewBox="0 0 10 13"><path d="M8.8 1.8 Q8 1 5 1 Q1.5 1 1.5 3.3 Q1.5 5 5 5.8 Q8.5 6.6 8.5 8.6 Q8.5 11 5 11 Q2 11 1 10" stroke="#a8a8a8" stroke-width="1.4" fill="none"/></svg>
</body></html>
